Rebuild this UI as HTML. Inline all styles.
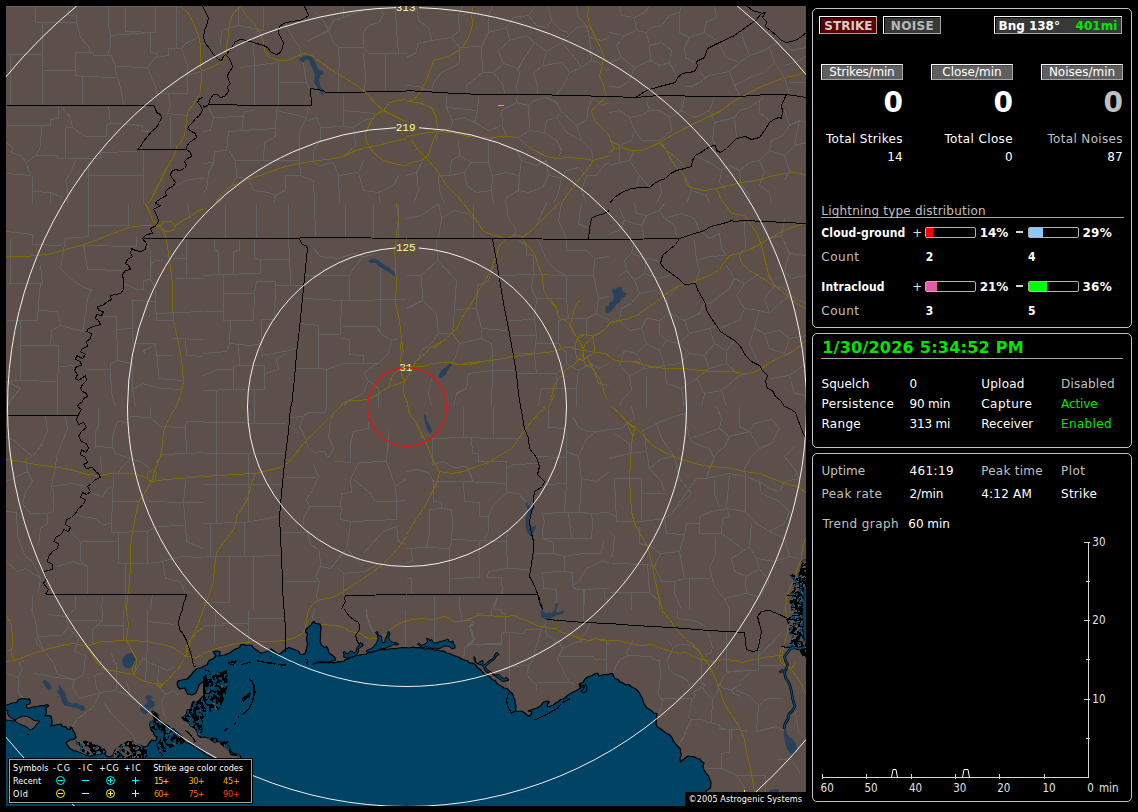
<!DOCTYPE html>
<html lang="en">
<head>
<meta charset="utf-8">
<title>Lightning Detector</title>
<style>
html,body{margin:0;padding:0;background:#000;}
body{position:relative;width:1138px;height:812px;overflow:hidden;font-family:"DejaVu Sans","Liberation Sans",sans-serif;}
#map{position:absolute;left:6px;top:6px;width:800px;height:800px;background:#5d504b;overflow:hidden;}
#map svg{position:absolute;left:0;top:0;display:block;}
.t{position:absolute;white-space:nowrap;display:block;}
.pn{position:absolute;box-sizing:border-box;border:1px solid #c4c4c4;border-radius:5px;background:#000;}
.bx{position:absolute;box-sizing:border-box;border:1px solid;border-color:#fff #a6a6a6 #a6a6a6 #fff;box-shadow:inset 1px 1px 0 #000;}
.bx.g{box-shadow:inset 1px 1px 0 #484848;}
.bar{position:absolute;box-sizing:border-box;border:1px solid #b4b4b4;border-radius:2px;width:51px;height:11px;background:#000;}
.bar i{position:absolute;left:0;top:0;height:9px;display:block;}
.hl{position:absolute;height:1px;background:#a8a8a8;}
#cpbox{position:absolute;left:685px;top:792px;width:121px;height:14px;background:#000;}
</style>
</head>
<body>

<div id="map">
<svg width="800" height="800" viewBox="6 6 800 800">
<defs><pattern id="mr" width="40" height="40" patternUnits="userSpaceOnUse"><rect width="40" height="40" fill="#004365"/><path d="M1 0h7v1h-7zM9 0h3v1h-3zM17 0h5v1h-5zM23 0h6v1h-6zM34 0h4v1h-4zM2 1h11v1h-11zM17 1h5v1h-5zM24 1h6v1h-6zM33 1h3v1h-3zM2 2h11v1h-11zM16 2h4v1h-4zM24 2h4v1h-4zM33 2h3v1h-3zM2 3h7v1h-7zM11 3h2v1h-2zM15 3h2v1h-2zM19 3h1v1h-1zM35 3h4v1h-4zM1 4h8v1h-8zM11 4h2v1h-2zM16 4h1v1h-1zM28 4h2v1h-2zM35 4h4v1h-4zM0 5h9v1h-9zM10 5h3v1h-3zM15 5h4v1h-4zM28 5h2v1h-2zM34 5h1v1h-1zM37 5h3v1h-3zM0 6h8v1h-8zM10 6h1v1h-1zM15 6h6v1h-6zM26 6h4v1h-4zM32 6h3v1h-3zM37 6h3v1h-3zM0 7h5v1h-5zM19 7h2v1h-2zM23 7h1v1h-1zM25 7h10v1h-10zM38 7h2v1h-2zM1 8h4v1h-4zM19 8h16v1h-16zM38 8h2v1h-2zM0 9h5v1h-5zM17 9h1v1h-1zM20 9h17v1h-17zM39 9h1v1h-1zM1 10h5v1h-5zM10 10h4v1h-4zM17 10h2v1h-2zM20 10h8v1h-8zM31 10h6v1h-6zM1 11h1v1h-1zM3 11h3v1h-3zM10 11h16v1h-16zM32 11h4v1h-4zM0 12h2v1h-2zM3 12h3v1h-3zM9 12h2v1h-2zM14 12h2v1h-2zM17 12h9v1h-9zM33 12h3v1h-3zM3 13h7v1h-7zM17 13h6v1h-6zM25 13h2v1h-2zM33 13h3v1h-3zM4 14h1v1h-1zM13 14h2v1h-2zM17 14h6v1h-6zM25 14h5v1h-5zM33 14h3v1h-3zM3 15h2v1h-2zM13 15h3v1h-3zM19 15h4v1h-4zM29 15h2v1h-2zM33 15h3v1h-3zM3 16h2v1h-2zM8 16h1v1h-1zM11 16h1v1h-1zM13 16h4v1h-4zM20 16h3v1h-3zM29 16h2v1h-2zM33 16h2v1h-2zM3 17h3v1h-3zM8 17h1v1h-1zM11 17h8v1h-8zM20 17h3v1h-3zM33 17h2v1h-2zM39 17h1v1h-1zM0 18h1v1h-1zM3 18h3v1h-3zM11 18h15v1h-15zM34 18h3v1h-3zM38 18h2v1h-2zM0 19h1v1h-1zM3 19h5v1h-5zM10 19h4v1h-4zM16 19h13v1h-13zM34 19h6v1h-6zM0 20h1v1h-1zM3 20h4v1h-4zM11 20h2v1h-2zM16 20h13v1h-13zM34 20h6v1h-6zM0 21h1v1h-1zM4 21h2v1h-2zM12 21h1v1h-1zM16 21h9v1h-9zM26 21h3v1h-3zM32 21h2v1h-2zM36 21h4v1h-4zM0 22h3v1h-3zM5 22h1v1h-1zM16 22h2v1h-2zM20 22h8v1h-8zM31 22h3v1h-3zM36 22h4v1h-4zM0 23h3v1h-3zM5 23h2v1h-2zM16 23h2v1h-2zM20 23h7v1h-7zM31 23h3v1h-3zM37 23h3v1h-3zM0 24h3v1h-3zM6 24h7v1h-7zM20 24h4v1h-4zM25 24h1v1h-1zM31 24h2v1h-2zM36 24h2v1h-2zM1 25h3v1h-3zM7 25h7v1h-7zM21 25h3v1h-3zM28 25h2v1h-2zM31 25h2v1h-2zM36 25h1v1h-1zM0 26h4v1h-4zM9 26h5v1h-5zM16 26h1v1h-1zM23 26h1v1h-1zM31 26h2v1h-2zM36 26h2v1h-2zM1 27h4v1h-4zM9 27h5v1h-5zM16 27h2v1h-2zM19 27h2v1h-2zM23 27h1v1h-1zM34 27h5v1h-5zM2 28h4v1h-4zM9 28h2v1h-2zM17 28h7v1h-7zM31 28h1v1h-1zM34 28h6v1h-6zM3 29h1v1h-1zM9 29h2v1h-2zM17 29h8v1h-8zM29 29h3v1h-3zM33 29h6v1h-6zM2 30h4v1h-4zM9 30h2v1h-2zM17 30h10v1h-10zM29 30h3v1h-3zM33 30h3v1h-3zM3 31h3v1h-3zM10 31h3v1h-3zM18 31h3v1h-3zM22 31h5v1h-5zM29 31h2v1h-2zM33 31h3v1h-3zM0 32h1v1h-1zM11 32h1v1h-1zM19 32h8v1h-8zM29 32h3v1h-3zM34 32h2v1h-2zM39 32h1v1h-1zM1 33h1v1h-1zM10 33h1v1h-1zM20 33h7v1h-7zM30 33h1v1h-1zM33 33h3v1h-3zM2 34h1v1h-1zM5 34h1v1h-1zM9 34h2v1h-2zM15 34h1v1h-1zM20 34h4v1h-4zM30 34h7v1h-7zM2 35h1v1h-1zM5 35h2v1h-2zM13 35h11v1h-11zM26 35h3v1h-3zM31 35h6v1h-6zM0 36h6v1h-6zM12 36h12v1h-12zM25 36h5v1h-5zM31 36h8v1h-8zM0 37h7v1h-7zM12 37h3v1h-3zM16 37h3v1h-3zM22 37h2v1h-2zM25 37h1v1h-1zM32 37h7v1h-7zM0 38h7v1h-7zM13 38h1v1h-1zM16 38h2v1h-2zM22 38h5v1h-5zM33 38h6v1h-6zM1 39h1v1h-1zM3 39h9v1h-9zM13 39h2v1h-2zM17 39h2v1h-2zM22 39h6v1h-6zM34 39h5v1h-5z" fill="#000"/><path d="M12 0h1v1h-1zM29 0h1v1h-1zM38 0h1v1h-1zM36 1h1v1h-1zM25 4h1v1h-1zM21 5h2v1h-2zM31 5h2v1h-2zM21 6h2v1h-2zM35 6h1v1h-1zM11 7h1v1h-1zM22 7h1v1h-1zM9 10h1v1h-1zM6 11h1v1h-1zM8 11h1v1h-1zM7 12h2v1h-2zM39 12h1v1h-1zM10 13h1v1h-1zM38 14h2v1h-2zM6 15h1v1h-1zM33 18h1v1h-1zM33 19h1v1h-1zM7 20h1v1h-1zM13 23h2v1h-2zM14 24h1v1h-1zM30 24h1v1h-1zM24 25h1v1h-1zM15 26h1v1h-1zM15 27h1v1h-1zM15 28h2v1h-2zM15 29h2v1h-2zM0 30h1v1h-1zM13 30h4v1h-4zM14 31h2v1h-2zM21 31h1v1h-1zM28 31h1v1h-1zM15 32h1v1h-1zM30 38h1v1h-1z" fill="#5d504b"/></pattern><pattern id="mr2" width="40" height="40" patternUnits="userSpaceOnUse"><rect width="40" height="40" fill="#5d504b"/><path d="M7 0h4v1h-4zM12 0h3v1h-3zM20 0h2v1h-2zM30 0h7v1h-7zM6 1h5v1h-5zM19 1h3v1h-3zM28 1h9v1h-9zM1 2h2v1h-2zM6 2h5v1h-5zM18 2h5v1h-5zM29 2h4v1h-4zM34 2h3v1h-3zM1 3h2v1h-2zM5 3h6v1h-6zM14 3h2v1h-2zM19 3h5v1h-5zM29 3h3v1h-3zM34 3h3v1h-3zM1 4h2v1h-2zM5 4h5v1h-5zM14 4h3v1h-3zM19 4h6v1h-6zM34 4h3v1h-3zM1 5h3v1h-3zM5 5h4v1h-4zM14 5h3v1h-3zM20 5h1v1h-1zM23 5h1v1h-1zM35 5h3v1h-3zM0 6h3v1h-3zM6 6h2v1h-2zM15 6h1v1h-1zM24 6h1v1h-1zM31 6h1v1h-1zM35 6h3v1h-3zM39 6h1v1h-1zM0 7h2v1h-2zM6 7h2v1h-2zM23 7h2v1h-2zM30 7h2v1h-2zM35 7h3v1h-3zM39 7h1v1h-1zM0 8h8v1h-8zM10 8h2v1h-2zM18 8h1v1h-1zM20 8h1v1h-1zM23 8h5v1h-5zM31 8h1v1h-1zM35 8h4v1h-4zM0 9h7v1h-7zM10 9h1v1h-1zM23 9h2v1h-2zM27 9h2v1h-2zM30 9h3v1h-3zM35 9h4v1h-4zM0 10h4v1h-4zM18 10h1v1h-1zM23 10h2v1h-2zM28 10h1v1h-1zM30 10h2v1h-2zM37 10h2v1h-2zM0 11h5v1h-5zM13 11h1v1h-1zM18 11h1v1h-1zM22 11h5v1h-5zM37 11h1v1h-1zM0 12h6v1h-6zM24 12h3v1h-3zM37 12h1v1h-1zM39 12h1v1h-1zM0 13h7v1h-7zM25 13h2v1h-2zM38 13h2v1h-2zM0 14h7v1h-7zM11 14h2v1h-2zM14 14h8v1h-8zM26 14h2v1h-2zM39 14h1v1h-1zM2 15h6v1h-6zM11 15h11v1h-11zM34 15h1v1h-1zM39 15h1v1h-1zM5 16h2v1h-2zM12 16h5v1h-5zM23 16h2v1h-2zM0 17h1v1h-1zM6 17h1v1h-1zM11 17h6v1h-6zM19 17h6v1h-6zM26 17h1v1h-1zM29 17h2v1h-2zM39 17h1v1h-1zM0 18h1v1h-1zM2 18h1v1h-1zM5 18h3v1h-3zM10 18h17v1h-17zM29 18h1v1h-1zM36 18h4v1h-4zM0 19h1v1h-1zM2 19h2v1h-2zM6 19h6v1h-6zM15 19h1v1h-1zM18 19h10v1h-10zM33 19h1v1h-1zM36 19h1v1h-1zM39 19h1v1h-1zM0 20h1v1h-1zM5 20h6v1h-6zM18 20h10v1h-10zM39 20h1v1h-1zM3 21h8v1h-8zM18 21h10v1h-10zM3 22h5v1h-5zM9 22h3v1h-3zM18 22h4v1h-4zM24 22h5v1h-5zM38 22h2v1h-2zM4 23h3v1h-3zM9 23h3v1h-3zM19 23h4v1h-4zM25 23h4v1h-4zM33 23h3v1h-3zM39 23h1v1h-1zM5 24h2v1h-2zM9 24h4v1h-4zM14 24h1v1h-1zM22 24h1v1h-1zM26 24h2v1h-2zM33 24h1v1h-1zM39 24h1v1h-1zM5 25h13v1h-13zM39 25h1v1h-1zM2 26h1v1h-1zM8 26h8v1h-8zM18 26h2v1h-2zM33 26h1v1h-1zM2 27h1v1h-1zM9 27h4v1h-4zM19 27h2v1h-2zM24 27h1v1h-1zM33 27h3v1h-3zM10 28h3v1h-3zM19 28h2v1h-2zM24 28h1v1h-1zM29 28h1v1h-1zM33 28h3v1h-3zM2 29h2v1h-2zM10 29h5v1h-5zM18 29h7v1h-7zM29 29h1v1h-1zM32 29h4v1h-4zM2 30h3v1h-3zM10 30h13v1h-13zM24 30h2v1h-2zM32 30h3v1h-3zM2 31h2v1h-2zM7 31h1v1h-1zM11 31h5v1h-5zM20 31h3v1h-3zM31 31h4v1h-4zM37 31h2v1h-2zM7 32h2v1h-2zM12 32h1v1h-1zM15 32h1v1h-1zM21 32h2v1h-2zM30 32h4v1h-4zM37 32h3v1h-3zM0 33h1v1h-1zM6 33h4v1h-4zM13 33h3v1h-3zM21 33h1v1h-1zM26 33h4v1h-4zM34 33h2v1h-2zM39 33h1v1h-1zM0 34h2v1h-2zM7 34h2v1h-2zM13 34h3v1h-3zM17 34h5v1h-5zM25 34h1v1h-1zM28 34h1v1h-1zM35 34h1v1h-1zM39 34h1v1h-1zM0 35h3v1h-3zM10 35h6v1h-6zM17 35h4v1h-4zM25 35h1v1h-1zM38 35h2v1h-2zM2 36h3v1h-3zM8 36h4v1h-4zM16 36h1v1h-1zM19 36h2v1h-2zM37 36h3v1h-3zM2 37h2v1h-2zM6 37h4v1h-4zM11 37h1v1h-1zM15 37h2v1h-2zM19 37h2v1h-2zM36 37h3v1h-3zM3 38h5v1h-5zM14 38h7v1h-7zM36 38h2v1h-2zM4 39h2v1h-2zM8 39h1v1h-1zM12 39h5v1h-5zM19 39h2v1h-2zM33 39h4v1h-4z" fill="#000"/><path d="M3 0h4v1h-4zM11 0h1v1h-1zM17 0h2v1h-2zM28 0h2v1h-2zM38 0h2v1h-2zM0 1h2v1h-2zM3 1h1v1h-1zM11 1h1v1h-1zM18 1h1v1h-1zM24 1h1v1h-1zM39 1h1v1h-1zM0 2h1v1h-1zM16 2h1v1h-1zM24 2h4v1h-4zM33 2h1v1h-1zM37 2h3v1h-3zM0 3h1v1h-1zM12 3h1v1h-1zM16 3h1v1h-1zM24 3h4v1h-4zM32 3h2v1h-2zM37 3h3v1h-3zM10 4h3v1h-3zM25 4h3v1h-3zM32 4h1v1h-1zM37 4h3v1h-3zM4 5h1v1h-1zM9 5h3v1h-3zM24 5h1v1h-1zM30 5h4v1h-4zM5 6h1v1h-1zM8 6h2v1h-2zM23 6h1v1h-1zM27 6h4v1h-4zM32 6h2v1h-2zM8 7h1v1h-1zM18 7h1v1h-1zM26 7h4v1h-4zM32 7h1v1h-1zM38 7h1v1h-1zM8 8h1v1h-1zM13 8h3v1h-3zM19 8h1v1h-1zM21 8h2v1h-2zM28 8h1v1h-1zM30 8h1v1h-1zM39 8h1v1h-1zM13 9h3v1h-3zM19 9h1v1h-1zM22 9h1v1h-1zM26 9h1v1h-1zM29 9h1v1h-1zM33 9h1v1h-1zM39 9h1v1h-1zM8 10h1v1h-1zM12 10h4v1h-4zM19 10h1v1h-1zM22 10h1v1h-1zM33 10h2v1h-2zM39 10h1v1h-1zM6 11h3v1h-3zM12 11h1v1h-1zM15 11h1v1h-1zM21 11h1v1h-1zM27 11h2v1h-2zM39 11h1v1h-1zM7 12h2v1h-2zM12 12h1v1h-1zM15 12h1v1h-1zM20 12h3v1h-3zM27 12h3v1h-3zM34 12h2v1h-2zM7 13h3v1h-3zM20 13h5v1h-5zM28 13h3v1h-3zM33 13h5v1h-5zM23 14h1v1h-1zM28 14h4v1h-4zM34 14h1v1h-1zM38 14h1v1h-1zM27 15h4v1h-4zM38 15h1v1h-1zM1 16h2v1h-2zM11 16h1v1h-1zM21 16h1v1h-1zM25 16h1v1h-1zM27 16h1v1h-1zM30 16h5v1h-5zM38 16h2v1h-2zM7 17h1v1h-1zM31 17h4v1h-4zM38 17h1v1h-1zM1 18h1v1h-1zM30 18h1v1h-1zM32 18h3v1h-3zM1 19h1v1h-1zM12 19h3v1h-3zM28 19h2v1h-2zM34 19h2v1h-2zM1 20h4v1h-4zM12 20h1v1h-1zM14 20h2v1h-2zM28 20h1v1h-1zM34 20h2v1h-2zM11 21h3v1h-3zM28 21h2v1h-2zM35 21h2v1h-2zM13 22h1v1h-1zM22 22h2v1h-2zM29 22h1v1h-1zM35 22h3v1h-3zM29 23h1v1h-1zM36 23h3v1h-3zM0 24h2v1h-2zM13 24h1v1h-1zM17 24h1v1h-1zM35 24h4v1h-4zM0 25h2v1h-2zM18 25h1v1h-1zM20 25h2v1h-2zM34 25h2v1h-2zM0 26h2v1h-2zM4 26h4v1h-4zM16 26h2v1h-2zM20 26h2v1h-2zM34 26h1v1h-1zM0 27h1v1h-1zM15 27h3v1h-3zM21 27h1v1h-1zM30 27h2v1h-2zM37 27h1v1h-1zM0 28h1v1h-1zM3 28h1v1h-1zM14 28h2v1h-2zM22 28h2v1h-2zM30 28h2v1h-2zM0 29h2v1h-2zM4 29h1v1h-1zM9 29h1v1h-1zM30 29h2v1h-2zM39 29h1v1h-1zM0 30h2v1h-2zM23 30h1v1h-1zM26 30h2v1h-2zM29 30h2v1h-2zM35 30h1v1h-1zM39 30h1v1h-1zM0 31h1v1h-1zM4 31h1v1h-1zM16 31h2v1h-2zM25 31h2v1h-2zM0 32h1v1h-1zM3 32h2v1h-2zM11 32h1v1h-1zM13 32h2v1h-2zM16 32h1v1h-1zM24 32h4v1h-4zM29 32h1v1h-1zM1 33h1v1h-1zM11 33h2v1h-2zM30 33h3v1h-3zM36 33h3v1h-3zM22 34h1v1h-1zM26 34h1v1h-1zM30 34h1v1h-1zM33 34h1v1h-1zM36 34h3v1h-3zM3 35h1v1h-1zM21 35h1v1h-1zM32 35h2v1h-2zM37 35h1v1h-1zM0 36h2v1h-2zM12 36h2v1h-2zM21 36h1v1h-1zM32 36h2v1h-2zM0 37h1v1h-1zM13 37h1v1h-1zM21 37h1v1h-1zM32 37h2v1h-2zM2 38h1v1h-1zM9 38h2v1h-2zM31 38h1v1h-1zM38 38h2v1h-2zM3 39h1v1h-1zM6 39h2v1h-2zM9 39h2v1h-2zM18 39h1v1h-1zM25 39h1v1h-1zM28 39h1v1h-1zM38 39h2v1h-2z" fill="#004365"/></pattern></defs>
<path fill="none" stroke="#626464" stroke-width="1" shape-rendering="crispEdges" d="M501.5,590.5 501.5,593.5M499.5,594.5 496.5,599.5 493.5,604.5 491.5,609.5 491.5,614.5M493.5,609.5 501.5,609.5 501.5,613.5 505.5,613.5 505.5,632.5 501.5,633.5 501.5,643.5 467.5,644.5M509.5,633.5 509.5,690.5M505.5,632.5 524.5,633.5 525.5,629.5 541.5,629.5 546.5,621.5M541.5,629.5 538.5,639.5 535.5,648.5 533.5,657.5 528.5,666.5 526.5,674.5 533.5,682.5 536.5,684.5 536.5,690.5M545.5,627.5 546.5,635.5 554.5,638.5 554.5,642.5M559.5,642.5 562.5,648.5 558.5,656.5 557.5,659.5 561.5,666.5 565.5,676.5 570.5,682.5 574.5,684.5M562.5,648.5 575.5,642.5 581.5,641.5 582.5,636.5 588.5,628.5 589.5,623.5M559.5,656.5 593.5,656.5 594.5,659.5 606.5,659.5 606.5,643.5 609.5,643.5M556.5,590.5 556.5,602.5M584.5,590.5 583.5,621.5M604.5,590.5 604.5,597.5 609.5,601.5M536.5,682.5 570.5,682.5M509.5,666.5 528.5,665.5M472.5,622.5 469.5,626.5 471.5,633.5 474.5,639.5 469.5,643.5 467.5,644.5M476.5,613.5 481.5,613.5 483.5,614.5M35.5,6.5 35.5,22.5 76.5,22.5M68.5,6.5 68.5,15.5 76.5,15.5 76.5,22.5 80.5,37.5 88.5,46.5 90.5,52.5M42.5,22.5 42.5,105.5M6.5,54.5 42.5,54.5M10.5,54.5 10.5,105.5M42.5,70.5 75.5,70.5 75.5,52.5 93.5,52.5 93.5,55.5 111.5,55.5M75.5,70.5 75.5,75.5 82.5,76.5 117.5,77.5 120.5,87.5 122.5,97.5 123.5,105.5M82.5,76.5 82.5,105.5M111.5,55.5 115.5,66.5 116.5,76.5M115.5,66.5 147.5,67.5 155.5,57.5 168.5,55.5 168.5,48.5 181.5,48.5 185.5,43.5 191.5,40.5 198.5,37.5M147.5,67.5 151.5,77.5 155.5,86.5 156.5,93.5 187.5,93.5 187.5,75.5 200.5,71.5M181.5,48.5 187.5,65.5 187.5,75.5M108.5,6.5 108.5,25.5 110.5,35.5 150.5,32.5 150.5,52.5 157.5,53.5 157.5,57.5M125.5,6.5 125.5,31.5 155.5,32.5M155.5,6.5 155.5,32.5M176.5,6.5 176.5,48.5M110.5,35.5 110.5,45.5 107.5,55.5M168.5,93.5 170.5,105.5 167.5,113.5 188.5,115.5M58.5,105.5 58.5,118.5 50.5,119.5 50.5,125.5 6.5,125.5M61.5,106.5 70.5,117.5 72.5,127.5 85.5,136.5 106.5,136.5 106.5,125.5 110.5,123.5 108.5,105.5M110.5,123.5 142.5,125.5 142.5,131.5 150.5,131.5M41.5,125.5 40.5,147.5 35.5,155.5 26.5,162.5 30.5,175.5 6.5,173.5M35.5,155.5 57.5,155.5 57.5,158.5 100.5,158.5 100.5,152.5 137.5,151.5M65.5,158.5 65.5,127.5 72.5,127.5M75.5,160.5 70.5,172.5 65.5,180.5 67.5,190.5 67.5,203.5M32.5,175.5 32.5,191.5 50.5,192.5 62.5,197.5M88.5,175.5 143.5,175.5M88.5,160.5 88.5,203.5M143.5,150.5 143.5,203.5M6.5,142.5 12.5,147.5 11.5,152.5 20.5,155.5 26.5,162.5M170.5,115.5 170.5,149.5M175.5,186.5 185.5,180.5 197.5,178.5 203.5,178.5M32.5,191.5 32.5,203.5M50.5,192.5 50.5,203.5M6.5,6.5 181.5,6.5M238.5,6.5 238.5,25.5 221.5,30.5 220.5,45.5M263.5,6.5 263.5,30.5 256.5,31.5M238.5,25.5 263.5,30.5M253.5,43.5 254.5,65.5 254.5,105.5M240.5,67.5 254.5,65.5 278.5,62.5 278.5,105.5M278.5,82.5 306.5,82.5 309.5,88.5M299.5,47.5 303.5,65.5 306.5,82.5M285.5,22.5 289.5,32.5 299.5,47.5M308.5,40.5 318.5,35.5 328.5,30.5 333.5,20.5 343.5,17.5 353.5,13.5 363.5,10.5M328.5,30.5 333.5,42.5 338.5,47.5 363.5,47.5 363.5,32.5 368.5,25.5 378.5,22.5 383.5,15.5 380.5,6.5M338.5,47.5 339.5,62.5 338.5,75.5 338.5,91.5M363.5,47.5 368.5,53.5 385.5,53.5 385.5,91.5M363.5,53.5 365.5,75.5 364.5,91.5M385.5,53.5 406.5,53.5M395.5,6.5 396.5,30.5 398.5,53.5M343.5,6.5 343.5,17.5M315.5,12.5 323.5,20.5 328.5,30.5M208.5,107.5 213.5,117.5 210.5,130.5 203.5,131.5M213.5,117.5 243.5,116.5 244.5,111.5 254.5,110.5M243.5,116.5 241.5,130.5 228.5,131.5 226.5,150.5 214.5,151.5 213.5,162.5 203.5,163.5M241.5,130.5 275.5,128.5 276.5,110.5 278.5,105.5M275.5,128.5 275.5,136.5 264.5,142.5 263.5,160.5 235.5,160.5 228.5,150.5M276.5,110.5 306.5,117.5 308.5,105.5M306.5,117.5 299.5,132.5 299.5,160.5 263.5,160.5M316.5,117.5 320.5,127.5 343.5,126.5 343.5,95.5M308.5,120.5 316.5,117.5M320.5,127.5 320.5,140.5 313.5,150.5 313.5,162.5M343.5,126.5 353.5,127.5 363.5,120.5 375.5,117.5M343.5,110.5 375.5,113.5M353.5,127.5 355.5,145.5 343.5,156.5M299.5,160.5 300.5,175.5 285.5,175.5 285.5,190.5 275.5,195.5 273.5,203.5M235.5,160.5 236.5,177.5 248.5,178.5 253.5,190.5 268.5,192.5 275.5,195.5M213.5,162.5 208.5,172.5 206.5,190.5 203.5,192.5M236.5,177.5 228.5,190.5 218.5,203.5M313.5,162.5 320.5,165.5 333.5,162.5 338.5,175.5 339.5,203.5M300.5,175.5 313.5,180.5 314.5,203.5M338.5,175.5 358.5,172.5 363.5,160.5M358.5,172.5 363.5,190.5 378.5,192.5 380.5,203.5M378.5,192.5 393.5,185.5 398.5,175.5M416.5,6.5 418.5,20.5 428.5,27.5 431.5,40.5 417.5,43.5 416.5,52.5 406.5,57.5M431.5,40.5 451.5,37.5 459.5,30.5 458.5,15.5 462.5,6.5M451.5,37.5 459.5,47.5 459.5,62.5 452.5,67.5 441.5,72.5 433.5,82.5 431.5,91.5M459.5,47.5 481.5,46.5 488.5,32.5 488.5,15.5 492.5,6.5M481.5,46.5 482.5,72.5 466.5,85.5 467.5,92.5M482.5,72.5 493.5,72.5 503.5,85.5 504.5,93.5M488.5,32.5 506.5,27.5 509.5,40.5 498.5,50.5 503.5,63.5 493.5,72.5M503.5,63.5 518.5,68.5 519.5,75.5 516.5,85.5 517.5,93.5M509.5,40.5 526.5,35.5 534.5,42.5 521.5,62.5 518.5,68.5M506.5,27.5 513.5,17.5 528.5,15.5 534.5,6.5M534.5,42.5 546.5,51.5 561.5,42.5 576.5,27.5 586.5,25.5M546.5,51.5 542.5,65.5 533.5,73.5 537.5,85.5 537.5,93.5M542.5,65.5 562.5,62.5 569.5,72.5 563.5,85.5 556.5,94.5M569.5,72.5 581.5,67.5 591.5,60.5 598.5,62.5M561.5,42.5 571.5,53.5 581.5,67.5M548.5,6.5 551.5,20.5 561.5,30.5 568.5,32.5M528.5,15.5 536.5,25.5 546.5,27.5 551.5,20.5M576.5,6.5 578.5,17.5 586.5,25.5 589.5,37.5 591.5,60.5M406.5,85.5 418.5,86.5 431.5,91.5M446.5,95.5 446.5,107.5 452.5,120.5 451.5,127.5M446.5,107.5 477.5,110.5 478.5,97.5M477.5,110.5 474.5,122.5 488.5,130.5 502.5,125.5 501.5,110.5 516.5,102.5 517.5,94.5M502.5,125.5 506.5,136.5M516.5,102.5 528.5,105.5 529.5,130.5 518.5,137.5M528.5,105.5 533.5,100.5 546.5,97.5 556.5,102.5 561.5,111.5 556.5,117.5 546.5,120.5 544.5,132.5 529.5,130.5M561.5,111.5 576.5,125.5 586.5,120.5 588.5,105.5 593.5,97.5M576.5,125.5 581.5,140.5 591.5,150.5 593.5,160.5M544.5,132.5 556.5,140.5 561.5,150.5 558.5,157.5M556.5,117.5 566.5,132.5 581.5,140.5M452.5,120.5 463.5,117.5 474.5,122.5M451.5,127.5 438.5,131.5 436.5,140.5M458.5,140.5 459.5,155.5 451.5,160.5 449.5,175.5 438.5,175.5M459.5,155.5 471.5,162.5 488.5,162.5 488.5,142.5 492.5,137.5M488.5,162.5 492.5,175.5 491.5,190.5 476.5,192.5 466.5,185.5 464.5,172.5 471.5,162.5M492.5,175.5 506.5,172.5 519.5,175.5 521.5,160.5 516.5,150.5M519.5,175.5 518.5,190.5 506.5,197.5 504.5,203.5M491.5,190.5 493.5,203.5M521.5,160.5 536.5,165.5 546.5,160.5 548.5,175.5 542.5,187.5 528.5,192.5 518.5,190.5M548.5,175.5 561.5,177.5 566.5,170.5 578.5,167.5M561.5,177.5 558.5,192.5 553.5,203.5M578.5,167.5 586.5,175.5 596.5,175.5 603.5,165.5 609.5,162.5M586.5,175.5 581.5,190.5 586.5,203.5M406.5,175.5 416.5,172.5 421.5,162.5M416.5,172.5 418.5,190.5 413.5,203.5M438.5,175.5 439.5,190.5 444.5,203.5M449.5,175.5 464.5,172.5M593.5,97.5 601.5,105.5 609.5,102.5M598.5,62.5 606.5,70.5 609.5,68.5M589.5,37.5 601.5,40.5 609.5,37.5M619.5,6.5 621.5,15.5 634.5,17.5 644.5,12.5 649.5,6.5M634.5,17.5 636.5,30.5 646.5,32.5 651.5,27.5 661.5,25.5 669.5,15.5 679.5,12.5 681.5,6.5M646.5,32.5 649.5,45.5 661.5,42.5 671.5,50.5 669.5,62.5 659.5,65.5 650.5,60.5 649.5,45.5M679.5,12.5 679.5,32.5 689.5,37.5 704.5,32.5 705.5,22.5 716.5,17.5 714.5,6.5M689.5,37.5 684.5,47.5 685.5,57.5 694.5,62.5M609.5,32.5 624.5,35.5 636.5,30.5M624.5,35.5 616.5,45.5 621.5,57.5 609.5,62.5M621.5,57.5 634.5,67.5 650.5,60.5M634.5,67.5 629.5,80.5 619.5,87.5 609.5,86.5M669.5,62.5 674.5,72.5 677.5,77.5M704.5,32.5 719.5,42.5M719.5,45.5 726.5,57.5 739.5,62.5 749.5,55.5 759.5,52.5 769.5,47.5 781.5,40.5M739.5,62.5 729.5,71.5 734.5,85.5 739.5,95.5M729.5,71.5 709.5,75.5 699.5,82.5 691.5,86.5 684.5,86.5M699.5,71.5 704.5,77.5 709.5,75.5M749.5,55.5 744.5,42.5 741.5,32.5M769.5,47.5 774.5,62.5 784.5,77.5 789.5,94.5M774.5,62.5 764.5,72.5 749.5,77.5 734.5,85.5M784.5,65.5 799.5,60.5 806.5,55.5M789.5,82.5 806.5,82.5M609.5,112.5 619.5,110.5 629.5,117.5 641.5,115.5 649.5,110.5 646.5,100.5 649.5,97.5M629.5,117.5 634.5,130.5 631.5,140.5 619.5,145.5M649.5,110.5 659.5,110.5 669.5,117.5 681.5,110.5 684.5,97.5M669.5,117.5 671.5,130.5 659.5,140.5M681.5,110.5 694.5,117.5 709.5,110.5 714.5,97.5M709.5,110.5 714.5,122.5 712.5,140.5 716.5,145.5M714.5,122.5 734.5,117.5 739.5,110.5 749.5,107.5 759.5,100.5 764.5,96.5M734.5,117.5 736.5,136.5M759.5,100.5 759.5,112.5 769.5,120.5M634.5,130.5 641.5,140.5 659.5,140.5 666.5,150.5M619.5,162.5 629.5,160.5 639.5,175.5 636.5,186.5M629.5,160.5 634.5,150.5M666.5,150.5 679.5,160.5 684.5,167.5M694.5,155.5 709.5,162.5 721.5,170.5 729.5,165.5 739.5,170.5 749.5,162.5 759.5,160.5 769.5,150.5 771.5,140.5 781.5,136.5 789.5,125.5 784.5,110.5M721.5,170.5 719.5,182.5 726.5,190.5M739.5,170.5 741.5,185.5 749.5,195.5 749.5,203.5M759.5,160.5 764.5,172.5 759.5,185.5 769.5,192.5 771.5,203.5M769.5,150.5 784.5,155.5 794.5,145.5 806.5,142.5M784.5,155.5 789.5,170.5 784.5,180.5M659.5,180.5 661.5,192.5 656.5,203.5M684.5,175.5 691.5,190.5 686.5,203.5M691.5,190.5 706.5,195.5 709.5,203.5M609.5,140.5 619.5,145.5 619.5,162.5 609.5,165.5M639.5,175.5 649.5,187.5M789.5,125.5 799.5,120.5 806.5,122.5M794.5,145.5 799.5,120.5M781.5,40.5 791.5,50.5 806.5,47.5M88.5,203.5 88.5,236.5 65.5,238.5 63.5,250.5M88.5,225.5 128.5,225.5 128.5,203.5M6.5,231.5 32.5,234.5 32.5,244.5 63.5,245.5M10.5,238.5 10.5,283.5M83.5,245.5 136.5,246.5 136.5,235.5M83.5,245.5 85.5,256.5 87.5,269.5 123.5,270.5M63.5,250.5 60.5,268.5 70.5,278.5 85.5,288.5 91.5,289.5 87.5,298.5M40.5,265.5 42.5,283.5 6.5,283.5M40.5,283.5 38.5,303.5 37.5,320.5 6.5,320.5M38.5,310.5 57.5,311.5 60.5,325.5 51.5,330.5 50.5,345.5 20.5,345.5M60.5,325.5 82.5,331.5 86.5,308.5 87.5,298.5M20.5,320.5 20.5,380.5 6.5,381.5M20.5,380.5 57.5,381.5 58.5,366.5 75.5,365.5M58.5,345.5 58.5,366.5M50.5,345.5 58.5,345.5M116.5,316.5 117.5,360.5 110.5,363.5 110.5,369.5 85.5,369.5M102.5,316.5 116.5,316.5M117.5,329.5 132.5,328.5 132.5,300.5 155.5,301.5 155.5,288.5M123.5,283.5 136.5,289.5 143.5,289.5 143.5,280.5 150.5,279.5M150.5,265.5 150.5,279.5 155.5,288.5M150.5,265.5 155.5,259.5 162.5,261.5M143.5,239.5 150.5,250.5 150.5,265.5M155.5,313.5 203.5,311.5M155.5,301.5 156.5,320.5 172.5,320.5M155.5,343.5 156.5,355.5 172.5,355.5M132.5,328.5 132.5,343.5 155.5,343.5 152.5,346.5 143.5,350.5 145.5,354.5M172.5,338.5 203.5,339.5M157.5,355.5 158.5,378.5 182.5,380.5M117.5,360.5 132.5,363.5 132.5,389.5 142.5,383.5 160.5,388.5 182.5,389.5M110.5,369.5 111.5,393.5 115.5,406.5M132.5,389.5 135.5,406.5M175.5,278.5 203.5,278.5M186.5,239.5 186.5,278.5M172.5,258.5 186.5,258.5M187.5,203.5 190.5,218.5M6.5,381.5 20.5,388.5 10.5,400.5 7.5,406.5M57.5,381.5 57.5,406.5M185.5,339.5 186.5,355.5 203.5,356.5M225.5,203.5 225.5,238.5M256.5,203.5 256.5,238.5M288.5,203.5 288.5,238.5M314.5,203.5 315.5,237.5M345.5,203.5 345.5,237.5M373.5,203.5 373.5,237.5M214.5,238.5 214.5,250.5 218.5,251.5 218.5,274.5 203.5,275.5M239.5,238.5 239.5,250.5 233.5,251.5 233.5,273.5M218.5,274.5 260.5,273.5 260.5,259.5 254.5,258.5 254.5,238.5M260.5,259.5 289.5,259.5 288.5,238.5M289.5,259.5 290.5,278.5 290.5,285.5 275.5,285.5 275.5,281.5 256.5,281.5 254.5,293.5M223.5,274.5 223.5,320.5 253.5,320.5 254.5,293.5 223.5,293.5M290.5,285.5 303.5,285.5M275.5,285.5 274.5,319.5 261.5,319.5 261.5,355.5 289.5,350.5 296.5,348.5M203.5,311.5 223.5,311.5M230.5,320.5 229.5,343.5 226.5,351.5 203.5,353.5M229.5,343.5 251.5,345.5 261.5,343.5M238.5,345.5 239.5,365.5 233.5,366.5 233.5,389.5 203.5,390.5M239.5,365.5 264.5,365.5 264.5,389.5 233.5,389.5M264.5,373.5 278.5,369.5 276.5,359.5 285.5,353.5M203.5,375.5 218.5,369.5 233.5,369.5M216.5,390.5 216.5,406.5M254.5,390.5 254.5,406.5M303.5,298.5 341.5,300.5 406.5,299.5M299.5,323.5 318.5,325.5 318.5,334.5 340.5,334.5 341.5,300.5M318.5,334.5 318.5,368.5 295.5,368.5M318.5,368.5 326.5,369.5 326.5,406.5M341.5,326.5 375.5,326.5 383.5,335.5 391.5,340.5 398.5,338.5M349.5,275.5 349.5,299.5M305.5,275.5 349.5,275.5 355.5,265.5 363.5,256.5 373.5,254.5M313.5,248.5 320.5,256.5 338.5,258.5 353.5,253.5 363.5,256.5M380.5,260.5 380.5,326.5M341.5,338.5 349.5,339.5 349.5,354.5 363.5,355.5 363.5,363.5 378.5,363.5 388.5,353.5 391.5,340.5M326.5,369.5 343.5,363.5 363.5,363.5M363.5,373.5 373.5,365.5 378.5,363.5M363.5,373.5 368.5,380.5 378.5,388.5 378.5,406.5M368.5,380.5 363.5,393.5 348.5,400.5 343.5,406.5M398.5,203.5 398.5,238.5M438.5,203.5 441.5,218.5 438.5,238.5M473.5,203.5 473.5,238.5M441.5,218.5 453.5,210.5 468.5,213.5 473.5,218.5M436.5,239.5 437.5,260.5 421.5,275.5 406.5,275.5M437.5,260.5 456.5,280.5 454.5,309.5 476.5,308.5 477.5,285.5 488.5,280.5 493.5,265.5M421.5,275.5 422.5,300.5 436.5,313.5 438.5,333.5 452.5,333.5 454.5,309.5M406.5,308.5 422.5,300.5M438.5,333.5 431.5,343.5 421.5,350.5 418.5,360.5M452.5,333.5 459.5,343.5 481.5,338.5 481.5,328.5 476.5,308.5M481.5,338.5 491.5,343.5 492.5,353.5 488.5,363.5M459.5,343.5 456.5,355.5 451.5,363.5M481.5,328.5 506.5,330.5M468.5,373.5 492.5,370.5 492.5,353.5M468.5,373.5 466.5,388.5 456.5,393.5 453.5,406.5M492.5,370.5 491.5,406.5M513.5,370.5 492.5,370.5M431.5,378.5 428.5,393.5 431.5,406.5M499.5,275.5 533.5,274.5 533.5,255.5 526.5,254.5 526.5,245.5 518.5,240.5M533.5,274.5 531.5,288.5 536.5,298.5 534.5,319.5 509.5,320.5M534.5,319.5 536.5,335.5 511.5,335.5M536.5,335.5 534.5,353.5 513.5,353.5M536.5,298.5 566.5,298.5 566.5,275.5 533.5,274.5M566.5,275.5 593.5,275.5 594.5,258.5 586.5,250.5 566.5,250.5 566.5,240.5M538.5,240.5 546.5,260.5 556.5,270.5 566.5,275.5M566.5,298.5 568.5,318.5 558.5,320.5 558.5,343.5 534.5,343.5M568.5,318.5 586.5,318.5 596.5,313.5 598.5,298.5 593.5,275.5M586.5,318.5 586.5,333.5 578.5,338.5M558.5,343.5 566.5,353.5 566.5,363.5 556.5,373.5 536.5,373.5 534.5,353.5M566.5,363.5 578.5,370.5 591.5,363.5 598.5,368.5 609.5,363.5M556.5,373.5 556.5,388.5 541.5,388.5 538.5,406.5M516.5,373.5 536.5,373.5M556.5,388.5 576.5,388.5 578.5,370.5M576.5,388.5 576.5,406.5M594.5,258.5 609.5,256.5M598.5,298.5 609.5,296.5M596.5,313.5 609.5,320.5M591.5,363.5 598.5,383.5 609.5,385.5M506.5,203.5 508.5,218.5 516.5,230.5 513.5,235.5M546.5,203.5 541.5,213.5 536.5,225.5 531.5,230.5M561.5,203.5 558.5,220.5 566.5,239.5M581.5,203.5 578.5,223.5 588.5,228.5M406.5,218.5 421.5,215.5 431.5,208.5 438.5,203.5M634.5,203.5 636.5,213.5 646.5,215.5 659.5,210.5 664.5,203.5M619.5,208.5 624.5,220.5 619.5,230.5 609.5,233.5M624.5,220.5 641.5,225.5 646.5,215.5M641.5,225.5 644.5,238.5M664.5,218.5 674.5,225.5 676.5,236.5M659.5,210.5 664.5,218.5 681.5,213.5 694.5,218.5 699.5,230.5M634.5,240.5 631.5,253.5 624.5,260.5 626.5,270.5 619.5,275.5M631.5,253.5 646.5,258.5 660.5,261.5M646.5,258.5 644.5,273.5 634.5,280.5 626.5,270.5M644.5,273.5 659.5,278.5 671.5,274.5M634.5,280.5 639.5,293.5 631.5,303.5 621.5,308.5 619.5,320.5 609.5,323.5M639.5,293.5 654.5,290.5 666.5,298.5 679.5,285.5M666.5,298.5 669.5,313.5 659.5,320.5 646.5,318.5 641.5,328.5 629.5,330.5 619.5,320.5M669.5,313.5 684.5,320.5 699.5,313.5 704.5,303.5M684.5,320.5 689.5,333.5 679.5,343.5 666.5,340.5 659.5,333.5 659.5,320.5M641.5,328.5 646.5,343.5 636.5,353.5 624.5,350.5 616.5,358.5M646.5,343.5 659.5,350.5 666.5,340.5M689.5,333.5 709.5,328.5 716.5,325.5M709.5,328.5 714.5,343.5 704.5,355.5 689.5,353.5 679.5,343.5M659.5,350.5 664.5,365.5 679.5,363.5 689.5,353.5M714.5,343.5 726.5,350.5 734.5,340.5M704.5,355.5 709.5,368.5 726.5,363.5 726.5,350.5M726.5,363.5 739.5,375.5 749.5,373.5M636.5,353.5 644.5,368.5 664.5,365.5M624.5,350.5 619.5,365.5 629.5,375.5 644.5,368.5M629.5,375.5 631.5,390.5 621.5,400.5 619.5,406.5M646.5,375.5 646.5,406.5M664.5,365.5 666.5,383.5 681.5,388.5 684.5,406.5M681.5,388.5 696.5,378.5 709.5,368.5M696.5,378.5 704.5,393.5 701.5,406.5M704.5,393.5 721.5,390.5 739.5,375.5M721.5,390.5 726.5,406.5M694.5,240.5 696.5,260.5 699.5,270.5 695.5,283.5M719.5,233.5 721.5,248.5 726.5,255.5M696.5,260.5 709.5,256.5 726.5,255.5M744.5,220.5 745.5,248.5 739.5,253.5M726.5,265.5 734.5,278.5 744.5,283.5 759.5,273.5M734.5,278.5 729.5,288.5 709.5,303.5 705.5,303.5M744.5,283.5 736.5,295.5 744.5,308.5 739.5,320.5 726.5,325.5 719.5,328.5M744.5,308.5 759.5,310.5 769.5,313.5 779.5,303.5 789.5,295.5M759.5,310.5 754.5,328.5 764.5,333.5 779.5,330.5 789.5,338.5 806.5,335.5M754.5,328.5 749.5,343.5 756.5,358.5 759.5,365.5M769.5,313.5 764.5,298.5 774.5,285.5 784.5,288.5 789.5,295.5 806.5,303.5M774.5,285.5 769.5,275.5M784.5,218.5 781.5,235.5 789.5,253.5 806.5,255.5M764.5,223.5 769.5,238.5 781.5,235.5M789.5,253.5 784.5,270.5 791.5,278.5 806.5,275.5M771.5,378.5 789.5,375.5 806.5,363.5M789.5,375.5 794.5,393.5 806.5,395.5M764.5,333.5 769.5,348.5 784.5,353.5 789.5,338.5M699.5,230.5 709.5,238.5 719.5,233.5M57.5,406.5 57.5,415.5M65.5,416.5 67.5,428.5 62.5,441.5 56.5,456.5 55.5,467.5M45.5,416.5 47.5,431.5 40.5,446.5 32.5,456.5 25.5,459.5M15.5,441.5 20.5,446.5 32.5,456.5M55.5,467.5 51.5,486.5 53.5,491.5 53.5,511.5 47.5,513.5 47.5,523.5 40.5,528.5 38.5,546.5M27.5,471.5 32.5,481.5 25.5,491.5 22.5,503.5 30.5,513.5 47.5,513.5M6.5,511.5 16.5,512.5 17.5,536.5 25.5,556.5 32.5,561.5 40.5,578.5M51.5,486.5 72.5,483.5 85.5,486.5M98.5,406.5 98.5,426.5 95.5,431.5 95.5,446.5 112.5,447.5 112.5,436.5 117.5,421.5 127.5,422.5M100.5,456.5 101.5,471.5M112.5,447.5 115.5,453.5 130.5,458.5 122.5,466.5 117.5,473.5M130.5,416.5 150.5,417.5 150.5,406.5M150.5,417.5 160.5,426.5 185.5,427.5 186.5,421.5 203.5,421.5M185.5,427.5 186.5,453.5 162.5,454.5 155.5,463.5M130.5,458.5 142.5,462.5 150.5,469.5M186.5,453.5 203.5,452.5M113.5,476.5 112.5,501.5 138.5,501.5M92.5,493.5 102.5,496.5 107.5,488.5 112.5,486.5M112.5,501.5 111.5,523.5 102.5,524.5 95.5,518.5 80.5,516.5 75.5,513.5M111.5,523.5 111.5,532.5 147.5,531.5 155.5,526.5 185.5,525.5 183.5,502.5 203.5,502.5M148.5,501.5 183.5,502.5M185.5,481.5 183.5,502.5M147.5,531.5 147.5,563.5 125.5,563.5M80.5,541.5 118.5,541.5 118.5,532.5M80.5,541.5 80.5,561.5 87.5,566.5 87.5,593.5M70.5,531.5 80.5,541.5M118.5,541.5 118.5,563.5 125.5,563.5 125.5,594.5M147.5,563.5 162.5,561.5 165.5,578.5 180.5,581.5 185.5,593.5M162.5,561.5 180.5,556.5 203.5,557.5M185.5,525.5 186.5,541.5 203.5,548.5M57.5,566.5 72.5,561.5 87.5,566.5M6.5,561.5 17.5,571.5 25.5,568.5 40.5,578.5 38.5,591.5M32.5,594.5 32.5,609.5M75.5,594.5 75.5,609.5M102.5,596.5 101.5,609.5M125.5,594.5 125.5,609.5M152.5,594.5 150.5,609.5M6.5,436.5 15.5,441.5M6.5,481.5 27.5,471.5M25.5,459.5 27.5,471.5M216.5,406.5 216.5,523.5M254.5,406.5 254.5,422.5M203.5,422.5 286.5,423.5M203.5,453.5 285.5,453.5M248.5,453.5 248.5,521.5M203.5,484.5 281.5,484.5M203.5,523.5 244.5,522.5 278.5,516.5M244.5,522.5 244.5,556.5 203.5,556.5M210.5,523.5 210.5,556.5M244.5,556.5 281.5,555.5M229.5,556.5 229.5,602.5 203.5,602.5M253.5,556.5 253.5,609.5M290.5,417.5 303.5,416.5 308.5,412.5 325.5,412.5 326.5,406.5M303.5,416.5 299.5,426.5 305.5,438.5 308.5,447.5 313.5,452.5 323.5,451.5 328.5,457.5 333.5,448.5 328.5,436.5 330.5,421.5 333.5,413.5M334.5,461.5 350.5,462.5 350.5,443.5 353.5,431.5 368.5,428.5 368.5,421.5M313.5,464.5 318.5,476.5 313.5,488.5 306.5,499.5 309.5,506.5 303.5,517.5 303.5,524.5M285.5,477.5 315.5,477.5M309.5,506.5 340.5,506.5 341.5,493.5 351.5,492.5 350.5,479.5 358.5,462.5 386.5,461.5 388.5,431.5M341.5,506.5 340.5,519.5 350.5,521.5 348.5,538.5 346.5,548.5M350.5,521.5 396.5,519.5 396.5,501.5 406.5,500.5M375.5,501.5 396.5,501.5 395.5,486.5 406.5,478.5M353.5,479.5 368.5,491.5 375.5,501.5M281.5,532.5 308.5,532.5 309.5,542.5 319.5,551.5 320.5,566.5 315.5,576.5 319.5,581.5 316.5,596.5 318.5,603.5M285.5,581.5 319.5,581.5M320.5,566.5 330.5,568.5 338.5,558.5 346.5,548.5 353.5,556.5 363.5,566.5M338.5,568.5 343.5,573.5 343.5,594.5M343.5,573.5 365.5,571.5 378.5,563.5M378.5,536.5 383.5,531.5 396.5,526.5 398.5,541.5 406.5,544.5M363.5,553.5 378.5,536.5M386.5,461.5 395.5,486.5M388.5,431.5 388.5,446.5M463.5,406.5 463.5,437.5 432.5,438.5 432.5,464.5M493.5,406.5 493.5,438.5 463.5,437.5M493.5,438.5 521.5,438.5M548.5,406.5 548.5,427.5 566.5,428.5M471.5,438.5 472.5,453.5 478.5,453.5 478.5,461.5 506.5,461.5 506.5,492.5M432.5,464.5 443.5,461.5 453.5,467.5 466.5,466.5 471.5,476.5 472.5,481.5M406.5,471.5 416.5,469.5 428.5,472.5 433.5,481.5 433.5,501.5 441.5,502.5 441.5,508.5 451.5,509.5 452.5,523.5 451.5,541.5M463.5,481.5 506.5,483.5M463.5,481.5 464.5,501.5 479.5,502.5 479.5,516.5 488.5,516.5 488.5,531.5 484.5,538.5M506.5,492.5 518.5,493.5 526.5,502.5M506.5,492.5 492.5,506.5 488.5,516.5M506.5,468.5 513.5,464.5 538.5,463.5M441.5,508.5 429.5,509.5 429.5,533.5 426.5,546.5 433.5,548.5M406.5,548.5 426.5,547.5 449.5,548.5 451.5,541.5M449.5,548.5 449.5,594.5M451.5,539.5 506.5,541.5 507.5,531.5 511.5,528.5M479.5,541.5 479.5,577.5 449.5,578.5M506.5,541.5 507.5,568.5 488.5,571.5 487.5,577.5 501.5,577.5 502.5,594.5M507.5,568.5 529.5,569.5M411.5,548.5 412.5,561.5 406.5,562.5M406.5,578.5 411.5,578.5 411.5,594.5M434.5,595.5 434.5,609.5M459.5,595.5 459.5,609.5M498.5,595.5 493.5,609.5M566.5,428.5 566.5,483.5 546.5,484.5M566.5,451.5 578.5,456.5 586.5,438.5 596.5,431.5 609.5,429.5M573.5,417.5 578.5,427.5 588.5,431.5 596.5,431.5M578.5,456.5 581.5,478.5 596.5,481.5 609.5,471.5M566.5,483.5 564.5,512.5 542.5,513.5 544.5,521.5 542.5,531.5 542.5,538.5M581.5,478.5 579.5,512.5 564.5,512.5M579.5,512.5 591.5,513.5 592.5,523.5 591.5,538.5 542.5,538.5M568.5,513.5 571.5,538.5M591.5,513.5 609.5,512.5M542.5,538.5 553.5,542.5 553.5,553.5 533.5,553.5M553.5,553.5 564.5,556.5 564.5,571.5 542.5,572.5 543.5,588.5 556.5,589.5 556.5,609.5M564.5,556.5 581.5,553.5 601.5,553.5 603.5,541.5M564.5,571.5 572.5,572.5 572.5,586.5 578.5,581.5 586.5,568.5 601.5,561.5 609.5,562.5M572.5,586.5 576.5,589.5 609.5,588.5M583.5,589.5 583.5,609.5M533.5,456.5 566.5,457.5M433.5,481.5 463.5,481.5M609.5,429.5 621.5,428.5 629.5,421.5 634.5,418.5 631.5,406.5M641.5,431.5 656.5,423.5 674.5,416.5 684.5,413.5M656.5,423.5 661.5,438.5 674.5,456.5 679.5,478.5 691.5,493.5M644.5,433.5 646.5,451.5 649.5,468.5 661.5,481.5 664.5,491.5M609.5,458.5 629.5,453.5 646.5,451.5M614.5,478.5 641.5,478.5 641.5,493.5 664.5,493.5M641.5,493.5 641.5,521.5 616.5,521.5 614.5,478.5M609.5,513.5 616.5,516.5M641.5,521.5 664.5,518.5 671.5,513.5 696.5,478.5 706.5,478.5M664.5,518.5 666.5,533.5 684.5,534.5 686.5,523.5 699.5,523.5M699.5,516.5 699.5,533.5 721.5,533.5 722.5,518.5 729.5,516.5 727.5,508.5M699.5,516.5 711.5,511.5 727.5,508.5 744.5,511.5 756.5,523.5 769.5,531.5 784.5,538.5M689.5,438.5 704.5,433.5 719.5,428.5 721.5,418.5 716.5,406.5M689.5,438.5 694.5,443.5 709.5,448.5 714.5,458.5M719.5,428.5 729.5,436.5 724.5,446.5 716.5,453.5 714.5,458.5 709.5,468.5 706.5,478.5M729.5,436.5 749.5,431.5 759.5,448.5 751.5,456.5 744.5,468.5 745.5,476.5M739.5,406.5 739.5,426.5 749.5,431.5M749.5,431.5 754.5,423.5 771.5,419.5 779.5,428.5 771.5,443.5 759.5,448.5M706.5,478.5 714.5,476.5 729.5,473.5 745.5,476.5 759.5,481.5 769.5,488.5 779.5,491.5M714.5,478.5 714.5,493.5 719.5,508.5M729.5,473.5 726.5,508.5M745.5,476.5 745.5,511.5M759.5,481.5 761.5,493.5 779.5,501.5M779.5,491.5 784.5,481.5 799.5,478.5M751.5,523.5 749.5,546.5 739.5,553.5 731.5,558.5 734.5,571.5 746.5,576.5 759.5,568.5 756.5,558.5 749.5,546.5M784.5,538.5 789.5,556.5 799.5,558.5M756.5,558.5 774.5,561.5 789.5,556.5M721.5,533.5 739.5,546.5 744.5,551.5M715.5,536.5 715.5,553.5 709.5,568.5 714.5,586.5 724.5,598.5 729.5,609.5M684.5,534.5 679.5,551.5 660.5,553.5 651.5,546.5 639.5,543.5 639.5,526.5M679.5,551.5 684.5,578.5 674.5,581.5 674.5,593.5 681.5,609.5M684.5,578.5 709.5,578.5M660.5,553.5 654.5,566.5 661.5,581.5 674.5,581.5M609.5,531.5 614.5,536.5 612.5,556.5 609.5,556.5M612.5,563.5 647.5,564.5 649.5,592.5 609.5,592.5M647.5,564.5 654.5,566.5M689.5,578.5 689.5,609.5M724.5,598.5 746.5,593.5 745.5,581.5 746.5,576.5M746.5,593.5 759.5,596.5 769.5,581.5 759.5,568.5M631.5,592.5 631.5,609.5M649.5,592.5 659.5,601.5 659.5,609.5M691.5,493.5 671.5,513.5M769.5,531.5 784.5,523.5 789.5,511.5 779.5,501.5M794.5,446.5 784.5,456.5 794.5,468.5 799.5,478.5M684.5,413.5 689.5,438.5M614.5,433.5 629.5,443.5 629.5,453.5M674.5,456.5 661.5,458.5 649.5,468.5M31.5,609.5 35.5,620.5 37.5,636.5 44.5,651.5 53.5,662.5 57.5,674.5 74.5,679.5M37.5,636.5 61.5,635.5 68.5,627.5 65.5,616.5M48.5,614.5 65.5,616.5 74.5,609.5M68.5,627.5 78.5,638.5 74.5,651.5 85.5,655.5M102.5,609.5 102.5,620.5 92.5,629.5 92.5,642.5M70.5,620.5 102.5,620.5M98.5,625.5 123.5,625.5 123.5,609.5M123.5,625.5 123.5,640.5M147.5,609.5 147.5,640.5 146.5,661.5 145.5,681.5M147.5,621.5 174.5,624.5M85.5,655.5 83.5,675.5 74.5,679.5 72.5,687.5 79.5,698.5M5.5,672.5 18.5,677.5 22.5,668.5 18.5,662.5 24.5,661.5M18.5,677.5 18.5,692.5 26.5,701.5M33.5,673.5 42.5,674.5 55.5,677.5 74.5,679.5M94.5,675.5 96.5,688.5 100.5,692.5 92.5,707.5 83.5,714.5 76.5,719.5 72.5,727.5M94.5,675.5 104.5,672.5M100.5,692.5 115.5,690.5 130.5,696.5 141.5,705.5M116.5,664.5 116.5,690.5M104.5,703.5 111.5,713.5 122.5,724.5 133.5,735.5 137.5,746.5M126.5,681.5 130.5,696.5M133.5,673.5 143.5,657.5 146.5,661.5 158.5,666.5 167.5,670.5 174.5,666.5M158.5,666.5 157.5,683.5M159.5,687.5 165.5,694.5 161.5,701.5 163.5,713.5 167.5,720.5M165.5,694.5 174.5,690.5 178.5,696.5M79.5,698.5 100.5,692.5M111.5,653.5 115.5,664.5 118.5,662.5M5.5,651.5 13.5,648.5M44.5,651.5 37.5,644.5 35.5,638.5M215.5,609.5 214.5,644.5M203.5,625.5 222.5,625.5 222.5,623.5 248.5,623.5M248.5,609.5 248.5,641.5M248.5,618.5 284.5,618.5M314.5,609.5 312.5,616.5 313.5,621.5M366.5,609.5 367.5,617.5 370.5,628.5 374.5,633.5M366.5,609.5 366.5,616.5 369.5,622.5 371.5,628.5 373.5,632.5M405.5,609.5 405.5,646.5M434.5,609.5 434.5,640.5M460.5,609.5 461.5,620.5 472.5,620.5 474.5,623.5 469.5,627.5 472.5,631.5 471.5,635.5 474.5,638.5 472.5,642.5 467.5,645.5 464.5,647.5 464.5,653.5 463.5,657.5M467.5,646.5 470.5,644.5 501.5,644.5 501.5,640.5M606.5,640.5 606.5,671.5M599.5,659.5 606.5,659.5M632.5,640.5 630.5,646.5 626.5,651.5 628.5,655.5 620.5,659.5 616.5,664.5 613.5,673.5M628.5,655.5 651.5,656.5 652.5,659.5 659.5,660.5 660.5,677.5 658.5,693.5 660.5,698.5 662.5,699.5 661.5,707.5 658.5,713.5M660.5,698.5 693.5,698.5 695.5,694.5 693.5,692.5 697.5,689.5 702.5,687.5 705.5,684.5 701.5,683.5 701.5,659.5 702.5,656.5 698.5,649.5 692.5,646.5 686.5,644.5 678.5,644.5 673.5,647.5 670.5,653.5 667.5,659.5 668.5,668.5 673.5,673.5 680.5,676.5 686.5,679.5 690.5,686.5M668.5,640.5 672.5,646.5M691.5,699.5 690.5,707.5 688.5,717.5 691.5,719.5 686.5,729.5 682.5,740.5M691.5,719.5 702.5,719.5 707.5,722.5 711.5,722.5 712.5,698.5 716.5,694.5 718.5,687.5 723.5,676.5 727.5,672.5 741.5,669.5M712.5,723.5 719.5,724.5 720.5,729.5 731.5,729.5 731.5,740.5M702.5,687.5 707.5,694.5 711.5,698.5M726.5,640.5 726.5,670.5M710.5,640.5 712.5,647.5 710.5,653.5 705.5,654.5M718.5,683.5 723.5,688.5 731.5,689.5 735.5,687.5 741.5,683.5M731.5,689.5 733.5,693.5 741.5,696.5M677.5,609.5 677.5,618.5 694.5,620.5 706.5,627.5M729.5,609.5 729.5,630.5M706.5,631.5 711.5,639.5M726.5,632.5 726.5,671.5 758.5,670.5 758.5,665.5 781.5,665.5M751.5,671.5 739.5,681.5M719.5,728.5 746.5,730.5 745.5,733.5M736.5,690.5 748.5,695.5 758.5,705.5M758.5,639.5 758.5,670.5M758.5,705.5 756.5,731.5 776.5,726.5 784.5,731.5M758.5,705.5 767.5,698.5 781.5,698.5M685.5,733.5 678.5,745.5M729.5,730.5 729.5,752.5 721.5,753.5 721.5,768.5 706.5,768.5M721.5,768.5 736.5,775.5 744.5,787.5 744.5,792.5M736.5,775.5 765.5,775.5 765.5,792.5M776.5,759.5 791.5,759.5 800.5,773.5M781.5,632.5 758.5,656.5M795.5,712.5 798.5,731.5 805.5,738.5"/>
<path fill="#28405c" stroke="none" d="M299,59 303,56.5 308,55.5 313,57.5 315.5,62.5 318,69 323,71 324,74 320.5,75 319,80 320.5,86 324,91 323,96 320.5,92.5 317,87.5 314,82.5 315,75 313,70 310.5,65 309,60 305.5,59.5 303,62.5 300,61ZM368,261 372,258.5 378,260 383,264 389,267.5 394,272 397,277 393,275 387,271 380.5,267.5 375.5,263 370.5,263ZM438.5,375.5 441,370.5 446,367 450,363 452,365 448.5,369 446,374 442,378 439,377.5ZM605,307 608.5,305.5 609,313 606,313ZM613,288 615,290.5 618,287 621.5,287 623,292 626.5,293 625,297 621.5,298 620,302 616.5,304 614,308 610,312 609,313 609,303 613,300.5 614,295.5 612,292ZM526,502 529,506 532,505 533.5,508.5 531,513.5 529,518.5 528.5,523.5 532,527 536.5,525 535,530 532,535 533.5,538.5 530,536 526.5,531 525.5,523.5 526,517 528,511 526.5,506ZM424,413.5 426.5,416 427,421 430,426 432,430 430.5,434 428,431 426,426 424.5,420ZM784,728.5 786,729.5 787,734 789.5,737 793,739.5 796,744 797,749 794.5,755.5 790.5,754 787,749 785,741.5 783.5,734ZM769,790.5 774,789 779,789.5 779,792 769,792ZM42.5,680.5 46,680 49.5,683.5 52,687.5 51,689.5 48,689.5 45.5,687 43.5,683.5ZM58.5,684.5 60.5,686 62.5,689.5 65,692.5 66,696 67.5,700.5 70,702.5 73.5,703.5 76.5,703 80,705 83,705.5 85,708 84.5,710.5 81,710.5 77.5,708.5 74,707.5 70.5,707 67.5,706 64.5,705.5 62,702.5 61,698.5 60,695.5 57.5,692.5 57,690.5 59.5,690 58.5,687ZM144.5,697.5 147.5,695 151.5,695.5 152.5,697.5 150.5,699 152,700.5 154.5,702 155,705 153,707.5 150,708.5 148,711 146.5,713.5 144,714.5 142.5,712.5 140.5,711 140,708.5 142.5,706 145.5,704.5 147.5,702 147,699.5ZM124,656.5 127.5,653.5 132.5,653 136,656.5 136,661.5 134,666 129,668.5 124.5,667 122,663 122.5,659ZM540,601 542,603 543,607.5 543.5,612 547,613.5 548.5,612.5 552,613 554.5,610 555.5,605.5 556.5,603 558,603.5 557,607.5 556,612 558.5,612.5 562,610.5 563.5,610.5 563.5,613.5 560,614.5 556,615.5 553,617 550,618 548,620 546,620.5 544.5,618 541,617.5 541,613 541.5,607.5 540.5,603.5Z"/>
<path fill="none" stroke="#7e6d06" stroke-width="1" shape-rendering="crispEdges" d="M181.5,6.5 187.5,12.5 193.5,22.5 198.5,35.5 200.5,45.5 200.5,62.5 201.5,75.5 200.5,92.5 197.5,97.5 192.5,105.5 187.5,112.5 186.5,120.5 185.5,130.5 183.5,137.5 180.5,142.5 176.5,146.5 175.5,152.5 173.5,156.5 170.5,161.5 165.5,170.5 160.5,180.5 155.5,190.5 150.5,200.5 147.5,203.5M240.5,6.5 246.5,15.5 253.5,22.5 259.5,32.5 263.5,42.5 264.5,51.5 269.5,57.5 278.5,60.5 288.5,60.5 295.5,56.5 303.5,53.5 310.5,54.5 315.5,58.5 325.5,65.5 335.5,72.5 345.5,78.5 358.5,86.5 368.5,95.5 375.5,103.5 383.5,110.5 393.5,115.5 403.5,120.5 406.5,121.5M240.5,6.5 233.5,12.5 229.5,22.5 228.5,35.5 226.5,47.5 223.5,60.5 213.5,66.5 203.5,70.5M215.5,203.5 220.5,195.5 228.5,187.5 240.5,182.5 253.5,177.5 268.5,172.5 285.5,166.5 303.5,162.5 318.5,160.5 333.5,158.5 343.5,156.5 355.5,150.5 365.5,147.5 378.5,145.5 388.5,142.5 398.5,140.5 406.5,138.5M383.5,110.5 375.5,114.5 370.5,122.5 365.5,132.5 366.5,142.5 373.5,152.5 383.5,160.5 393.5,163.5 403.5,165.5 406.5,165.5M383.5,110.5 389.5,102.5 398.5,100.5 406.5,99.5M406.5,101.5 413.5,100.5 421.5,90.5 428.5,75.5 433.5,60.5 448.5,56.5 461.5,48.5 468.5,37.5 472.5,25.5 471.5,12.5 473.5,6.5M406.5,136.5 421.5,133.5 436.5,131.5 451.5,132.5 468.5,136.5 488.5,137.5 506.5,136.5 518.5,137.5 526.5,145.5 536.5,151.5 546.5,156.5 556.5,158.5 568.5,157.5 581.5,158.5 593.5,160.5 609.5,155.5M411.5,140.5 418.5,150.5 428.5,160.5 438.5,172.5 446.5,185.5 456.5,195.5 463.5,203.5M406.5,101.5 418.5,102.5 431.5,107.5 436.5,117.5 437.5,130.5 432.5,142.5 428.5,155.5 421.5,160.5 411.5,162.5 406.5,165.5M588.5,6.5 587.5,15.5 589.5,25.5 594.5,35.5 599.5,45.5 603.5,55.5 602.5,65.5 599.5,75.5 603.5,85.5 606.5,96.5 596.5,105.5 591.5,111.5 594.5,120.5 601.5,127.5 606.5,132.5 609.5,136.5M593.5,160.5 586.5,170.5 576.5,182.5 568.5,192.5 561.5,203.5M609.5,152.5 614.5,148.5 621.5,147.5 631.5,150.5 641.5,150.5 651.5,146.5 659.5,142.5 669.5,136.5 684.5,128.5 696.5,122.5 709.5,116.5 721.5,110.5 734.5,100.5 744.5,95.5 759.5,87.5 771.5,82.5 784.5,77.5 796.5,75.5 806.5,71.5M609.5,136.5 611.5,143.5 614.5,148.5M659.5,142.5 666.5,150.5 671.5,160.5 676.5,167.5 684.5,175.5 686.5,185.5 694.5,188.5 704.5,190.5 716.5,188.5 729.5,185.5 741.5,182.5 756.5,180.5 769.5,176.5 784.5,173.5 796.5,172.5 806.5,175.5M716.5,188.5 720.5,197.5 724.5,203.5M6.5,256.5 25.5,256.5 37.5,255.5 52.5,253.5 65.5,249.5 80.5,245.5 95.5,240.5 107.5,235.5 120.5,230.5 132.5,226.5 145.5,225.5 160.5,226.5M160.5,226.5 163.5,221.5 171.5,221.5 175.5,225.5 173.5,230.5 167.5,231.5 162.5,230.5 160.5,226.5M160.5,226.5 152.5,220.5 150.5,213.5 146.5,205.5 145.5,203.5M163.5,228.5 166.5,240.5 168.5,253.5 170.5,268.5 172.5,283.5 172.5,303.5 173.5,320.5 177.5,338.5 180.5,353.5 182.5,368.5 183.5,383.5 180.5,395.5 176.5,406.5M175.5,225.5 182.5,220.5 190.5,216.5 197.5,211.5 203.5,208.5M396.5,203.5 398.5,218.5 396.5,233.5 394.5,248.5 395.5,265.5 396.5,283.5 395.5,303.5 399.5,320.5 401.5,338.5 403.5,353.5M433.5,348.5 446.5,338.5 456.5,328.5 463.5,315.5 471.5,303.5 478.5,290.5 486.5,278.5 492.5,265.5 496.5,255.5 499.5,245.5 506.5,238.5 513.5,235.5M463.5,203.5 471.5,213.5 478.5,223.5 483.5,231.5 491.5,234.5 498.5,236.5 506.5,238.5M513.5,235.5 523.5,236.5 533.5,228.5 541.5,220.5 548.5,213.5 556.5,205.5 558.5,203.5M522.5,239.5 528.5,246.5 534.5,253.5 537.5,263.5 542.5,275.5 543.5,290.5 549.5,300.5 556.5,308.5M463.5,363.5 481.5,361.5 498.5,359.5 513.5,356.5 528.5,354.5 546.5,352.5M553.5,395.5 549.5,406.5M639.5,313.5 649.5,306.5 659.5,299.5 669.5,291.5 679.5,285.5 689.5,283.5 699.5,279.5 709.5,275.5 719.5,269.5 725.5,260.5 729.5,255.5 739.5,253.5 749.5,249.5 759.5,244.5 769.5,238.5 781.5,231.5 794.5,226.5 806.5,222.5M724.5,203.5 731.5,213.5 744.5,215.5 751.5,225.5 757.5,234.5 761.5,245.5 764.5,258.5 767.5,270.5 770.5,280.5M739.5,253.5 740.5,261.5 749.5,270.5 759.5,276.5 770.5,283.5 781.5,290.5 791.5,299.5 799.5,305.5 806.5,308.5M631.5,361.5 646.5,365.5 664.5,368.5 684.5,368.5 699.5,370.5 714.5,371.5 731.5,371.5 744.5,373.5 754.5,372.5 761.5,368.5 771.5,361.5 784.5,355.5 794.5,350.5 801.5,344.5 806.5,339.5M6.5,459.5 20.5,461.5 35.5,464.5 50.5,466.5 65.5,468.5 77.5,471.5 87.5,474.5 100.5,475.5 112.5,473.5 125.5,473.5 135.5,473.5 145.5,477.5 151.5,481.5 165.5,479.5 180.5,478.5 192.5,477.5 203.5,475.5M176.5,406.5 172.5,412.5 167.5,421.5 163.5,431.5 162.5,443.5 160.5,456.5 155.5,468.5 151.5,481.5 145.5,491.5 138.5,502.5 135.5,516.5 132.5,531.5 130.5,546.5 130.5,566.5 129.5,581.5 127.5,596.5 126.5,609.5M147.5,472.5 152.5,469.5 156.5,472.5 155.5,478.5 150.5,481.5 147.5,478.5 147.5,472.5M203.5,476.5 218.5,475.5 235.5,474.5 255.5,473.5 268.5,470.5 280.5,467.5 288.5,462.5 295.5,453.5 303.5,443.5 313.5,433.5 323.5,423.5 333.5,413.5 340.5,406.5M255.5,473.5 251.5,483.5 248.5,496.5 243.5,506.5 236.5,516.5 235.5,526.5 230.5,533.5 223.5,542.5 216.5,552.5 214.5,566.5 213.5,581.5 209.5,593.5 205.5,603.5 203.5,609.5M406.5,536.5 400.5,544.5 393.5,553.5 383.5,563.5 373.5,571.5 363.5,578.5 353.5,584.5 343.5,591.5 333.5,597.5 320.5,599.5 313.5,603.5 308.5,609.5M419.5,428.5 426.5,443.5 431.5,456.5 436.5,466.5 439.5,471.5M439.5,471.5 451.5,473.5 463.5,471.5 476.5,466.5 488.5,462.5 501.5,454.5 511.5,448.5 516.5,441.5 523.5,431.5 531.5,421.5 538.5,413.5 544.5,408.5 543.5,406.5M439.5,471.5 437.5,481.5 431.5,493.5 423.5,508.5 416.5,518.5 408.5,531.5 406.5,534.5M611.5,406.5 619.5,413.5 626.5,421.5 634.5,428.5 632.5,436.5 631.5,446.5 630.5,461.5 629.5,478.5 630.5,496.5 631.5,511.5 634.5,523.5 641.5,536.5 647.5,546.5 651.5,561.5 654.5,576.5 657.5,591.5 660.5,603.5 662.5,609.5M626.5,421.5 636.5,428.5 644.5,436.5 651.5,444.5 664.5,452.5 679.5,458.5 694.5,463.5 709.5,466.5 726.5,467.5 744.5,471.5 759.5,473.5 771.5,478.5 786.5,483.5 799.5,487.5 806.5,493.5M626.5,421.5 630.5,431.5 634.5,436.5M806.5,536.5 802.5,546.5 801.5,558.5 797.5,568.5 794.5,578.5 789.5,588.5 786.5,598.5 785.5,609.5M335.5,625.5 339.5,626.5 344.5,627.5 349.5,631.5 356.5,632.5 361.5,633.5 364.5,636.5 368.5,638.5 377.5,638.5 381.5,635.5 384.5,635.5 387.5,632.5 391.5,628.5 397.5,624.5 404.5,621.5 412.5,619.5 422.5,618.5 429.5,619.5 437.5,618.5 443.5,616.5 447.5,617.5 453.5,621.5 459.5,621.5 466.5,620.5 472.5,617.5 477.5,615.5M599.5,640.5 617.5,640.5 630.5,643.5 641.5,645.5 652.5,644.5 661.5,648.5 671.5,651.5 678.5,653.5 686.5,652.5 692.5,656.5 698.5,658.5 706.5,660.5 713.5,661.5 723.5,659.5 736.5,660.5 741.5,662.5M686.5,640.5 692.5,643.5 698.5,651.5 703.5,658.5 708.5,664.5 712.5,672.5 716.5,681.5 719.5,689.5 722.5,698.5 726.5,707.5 731.5,714.5 736.5,722.5 741.5,731.5M741.5,662.5 754.5,659.5 769.5,656.5 781.5,655.5 786.5,654.5M661.5,609.5 669.5,619.5 676.5,629.5 686.5,639.5M741.5,731.5 744.5,739.5 746.5,751.5 749.5,764.5 752.5,779.5 754.5,792.5M785.5,609.5 787.5,619.5 787.5,631.5 784.5,644.5 781.5,655.5 784.5,664.5 791.5,670.5 797.5,677.5 802.5,686.5 806.5,695.5M781.5,646.5 779.5,655.5 780.5,662.5 786.5,666.5 792.5,667.5 795.5,662.5M136.5,660.5 134.5,662.5 132.5,667.5 132.5,672.5 135.5,676.5 141.5,680.5 148.5,682.5 155.5,683.5 158.5,685.5 161.5,686.5 164.5,682.5 168.5,679.5 173.5,673.5 178.5,668.5 181.5,663.5 183.5,660.5M156.5,684.5 160.5,687.5 162.5,684.5 158.5,683.5 156.5,684.5M6.5,661.5 15.5,660.5 27.5,655.5 45.5,649.5 65.5,644.5 75.5,643.5 86.5,646.5 92.5,654.5 96.5,662.5 105.5,669.5 117.5,671.5 132.5,674.5M86.5,646.5 100.5,641.5 127.5,640.5 147.5,641.5 170.5,646.5 180.5,652.5 186.5,656.5 195.5,657.5 203.5,654.5M186.5,656.5 186.5,646.5 190.5,639.5 196.5,632.5 203.5,627.5M6.5,616.5 11.5,624.5 12.5,639.5 11.5,654.5 15.5,660.5M126.5,640.5 128.5,624.5 126.5,609.5M126.5,640.5 131.5,649.5 136.5,659.5 135.5,671.5 133.5,674.5M476.5,615.5 483.5,615.5 490.5,615.5 496.5,616.5 505.5,616.5 514.5,615.5 520.5,618.5 526.5,620.5 533.5,623.5 538.5,626.5 544.5,626.5 550.5,628.5 556.5,628.5 559.5,631.5 565.5,633.5 570.5,635.5 575.5,636.5 581.5,639.5 590.5,640.5 594.5,638.5 599.5,639.5 609.5,640.5M203.5,653.5 213.5,649.5 228.5,645.5 243.5,642.5 258.5,641.5 273.5,641.5 285.5,640.5 295.5,637.5 303.5,632.5 306.5,627.5 310.5,623.5 320.5,624.5 335.5,625.5M305.5,629.5 306.5,619.5 308.5,609.5M203.5,609.5 197.5,625.5 190.5,640.5 185.5,657.5M401.5,340.5 400.5,347.5 401.5,354.5 400.5,360.5 402.5,368.5 401.5,374.5 404.5,380.5 403.5,389.5 404.5,396.5 407.5,402.5 408.5,410.5 412.5,417.5 416.5,423.5 420.5,431.5 421.5,437.5 423.5,439.5M340.5,406.5 343.5,402.5 351.5,400.5 358.5,400.5 367.5,399.5 374.5,396.5 381.5,391.5 389.5,386.5 396.5,384.5 404.5,381.5 408.5,375.5 411.5,370.5 413.5,366.5 415.5,361.5 420.5,357.5 426.5,352.5 429.5,347.5 436.5,344.5 442.5,340.5M388.5,386.5 392.5,375.5 396.5,371.5 401.5,369.5 408.5,367.5 413.5,366.5M413.5,366.5 423.5,366.5 432.5,363.5 442.5,362.5 450.5,362.5 458.5,364.5 468.5,364.5 480.5,362.5M579.5,335.5 583.5,334.5 589.5,335.5 592.5,335.5 593.5,341.5 594.5,348.5 594.5,351.5 592.5,354.5 589.5,355.5 586.5,356.5 583.5,360.5 579.5,359.5 576.5,357.5 575.5,352.5 575.5,346.5 576.5,340.5 579.5,335.5M551.5,300.5 553.5,303.5 556.5,306.5 557.5,313.5 559.5,318.5 565.5,320.5 569.5,324.5 573.5,332.5 576.5,336.5 579.5,340.5 581.5,345.5 583.5,349.5M580.5,300.5 576.5,303.5 574.5,309.5 572.5,317.5 570.5,323.5 569.5,324.5M640.5,314.5 633.5,316.5 626.5,319.5 618.5,320.5 610.5,322.5 605.5,328.5 600.5,332.5 594.5,335.5 589.5,340.5 584.5,344.5 583.5,349.5M540.5,352.5 547.5,352.5 556.5,350.5 564.5,347.5 572.5,347.5 576.5,349.5 583.5,350.5M583.5,350.5 589.5,351.5 595.5,352.5 605.5,353.5 610.5,357.5 615.5,360.5 621.5,361.5 628.5,361.5 636.5,361.5 640.5,362.5M583.5,352.5 581.5,357.5 576.5,361.5 573.5,365.5 568.5,367.5 564.5,371.5 563.5,375.5 558.5,378.5 554.5,384.5 552.5,392.5 551.5,397.5 548.5,400.5M583.5,352.5 583.5,360.5 586.5,365.5 591.5,367.5 595.5,372.5 599.5,378.5 602.5,386.5 604.5,393.5 607.5,400.5M586.5,356.5 589.5,361.5 591.5,367.5M583.5,349.5 583.5,352.5"/>
<path fill="#004365" stroke="#000" stroke-width="1.25" stroke-linejoin="round" d="M5,705.5 8.5,704.5 12.5,703 16.5,702.5 18.5,699.5 22.5,698.5 26.5,699 29.5,699 30.5,702 29.5,704 26.5,704.5 26.5,707 28,708.5 32.5,707 37.5,706.5 41,705.5 45,705.5 46.5,704.5 48.5,705.5 48,706.5 46,708 46.5,712.5 45,716 48,715.5 51,716 52,721 52,724 50.5,726 55,725 58.5,724.5 61,724 62.5,726.5 65.5,726.5 67.5,729 70,729.5 70.5,727 72,728 73.5,731 75,733.5 76,737.5 73.5,739.5 70,740 66,742.5 67.5,745.5 70,748.5 73.5,750.5 76,751 78.5,752 82.5,753.5 86,755 90,756.5 95,755 100,754 103.5,753 106,751.5 105,754.5 107.5,756.5 110,756.5 113,755.5 114,752.5 115.5,749.5 118.5,748 121,745 125,743.5 127.5,741.5 129.5,742 132,741.5 135,743.5 138.5,744.5 142,746 142,746 144.5,747 147.5,746 149.5,742.5 152,740 155.5,741 157,737.5 154.5,735.5 153.5,732.5 151.5,730.5 150.5,728 149.5,724.5 150.5,722 154.5,720 153,715.5 152,711 155,712.5 158,715 157.5,717.5 160.5,721 163,723 166,724.5 168.5,726 170.5,728.5 173.5,729 175.5,731 179,734 181.5,736 183,738.5 185.5,742.5 189.5,743.5 192,745 194.5,746 197,748 199,749.5 202,751 204.5,753 206.5,755 209.5,756 212,757.5 214.5,759.5 217,759 219.5,759.5 222.5,758.5 225,759 228,759.5 230.5,758.5 233,759.5 236,759.5 238.5,758.5 241.5,759 240.5,756.5 238,754 233,753.5 230.5,751 229.5,747.5 227.5,745 227,742 224.5,742 222,742.5 218,741.5 214.5,742.5 212,740.5 208,738 204.5,737 200.5,737.5 198,735 197,731 194.5,728 190.5,726 188.5,722 184,720 182,717.5 184.5,716.5 186.5,713.5 187.5,709.5 191,709.5 191.5,705.5 193,701.5 197,702.5 199.5,700 202,697 205.5,696 206.5,691 206.5,688.5 205,686 204,681 202,682.5 199,685 197.5,689.5 195.5,693.5 192,695 187.5,694 186,691 184.5,688 180,689 178,687 177,684 178,681 182,680 187,679 189,677 191,675 192.5,673 194,671 197,668.5 202,667.5 204,666 207,665 208,662.5 209.5,660 210.5,660 214,658 216,656 214.5,653.5 213.5,653 213.5,651.5 216.5,651 220,651.5 220,653.5 219,656 221.5,655.5 224.5,655 227,654 229.5,653 231.5,651.5 235.5,649 239.5,647.5 240.5,645 243.5,644.5 246.5,645.5 249.5,645 252,645.5 253,647.5 255,649 258,651 260.5,653 264,652.5 268,651 271,649 274.5,651.5 278,654.5 281,653 284,650.5 286,649 289,647.5 293,649 296.5,650.5 299,651.5 299.5,654 302.5,654.5 305.5,653 306.5,649 307.5,644 306.5,639 307.5,634 305.5,631.5 306,629 308,627.5 310.5,625.5 312.5,622.5 314,621.5 315.5,623.5 320,624 321,627.5 320.5,632.5 320.5,638 320,641.5 321.5,645 324.5,647.5 326.5,646.5 328,649 329,653 332,655 334.5,657 335.5,660 333,661 328,662 323,662 319,661.5 315.5,663 313,664 316.5,663 320.5,662.5 324,662.5 328,662.5 331.5,662.5 335.5,662.5 338.5,661.5 341.5,661.5 344.5,661 345,659.5 348,659 350.5,657.5 353.5,656.5 356.5,655.5 359.5,655 362.5,654.5 366,654 369,652.5 372.5,652 376,651 379,650 382.5,649.5 385.5,649.5 389,649 392.5,648.5 396,648.5 399,648 402.5,647.5 405.5,647.5 409,648 412.5,647 415.5,647.5 419,647.5 422.5,648.5 425.5,649 429,648.5 432.5,649.5 435,650 438,650 441,651 444,651 446.5,653 449.5,653.5 452.5,655 455.5,656 458.5,657 461.5,659 464.5,660 467.5,661 469.5,663 472.5,663 475,664.5 477,666.5 477,667.5 480,669 482,671.5 484,674 487,675.5 490,677 492,679.5 495,680.5 497,683.5 499.5,685 502,686.5 504,688 507,688.5 510,691.5 513,694.5 513.5,697.5 515,700 515,703 516,706 515.5,710.5 518,711.5 521,711 523.5,712 525.5,713.5 528.5,716.5 531,714.5 532,712 528,711 532,709.5 537,708 540.5,706 543,702.5 547,701 549.5,702 547,705 548,707 550.5,706 553.5,705 555.5,703 558,702 560.5,699.5 563,699 566,697 568,695 570.5,693.5 573,692 575.5,691 578.5,689.5 580.5,687.5 579,684 583,682.5 585,679 587.5,677 592,675.5 594.5,674 597.5,673 599,676 604,674.5 609,674.5 609,674 612.5,673.5 613.5,676 615,678.5 618,679.5 620,682 623,683 625,684.5 629,684.5 631.5,687 634,688 636.5,689.5 639.5,693 641,696 642.5,698.5 643,701 644,703.5 646.5,707.5 650.5,710 653.5,713 657,713.5 656.5,716.5 656.5,720 656,723 657,726.5 660,728.5 664,731.5 666,733 668.5,734 672,737.5 673.5,741 674,741.5 676.5,745 678.5,747 680.5,749 680.5,752 681.5,755 680,758 680.5,762 684,759 688,756 691,756.5 694,756.5 697,758.5 700,759 701.5,761.5 704,763 703,766 703.5,769 705,771.5 706.5,774 708.5,776 709.5,779 711,782.5 710.5,788 706.5,790.5 705,794 705,797 706,800 705.5,803.5 705,806.5 705.5,808 4,808 4,705.5Z"/>
<path fill="#004365" stroke="#000" stroke-width="1" stroke-linejoin="round" d="M343,652 345,651.5 346.5,654 349,653 350,651 352.5,651.5 353.5,653 355.5,652 356.5,650 357,647.5 358.5,646 360.5,642.5 363,644 363,646 360.5,647 358.5,649 358.5,652 356.5,654.5 354,656.5 350,657.5 346.5,658 343.5,657 344,654.5ZM366,651 370,649 372,648 374,646.5 375,644.5 376.5,643 378,639 377.5,635 375.5,632.5 377.5,631.5 378.5,635.5 381.5,636 381.5,638 382,640.5 382,642.5 385,642.5 385,640 386,637.5 387.5,634 388,631.5 389.5,632 390,634.5 389,636.5 389,639 391,641.5 393.5,642.5 397.5,643 398.5,644.5 396,645 393.5,644.5 391,646 388,647 385,648.5 381.5,648.5 378.5,650 375.5,651 372.5,652 370,652 367.5,652.5ZM417.5,644 419.5,643.5 421,645.5 425,644 427.5,641.5 426.5,638.5 429,639 430,641 431.5,639 432.5,641.5 435,643.5 438.5,642 442.5,641 446,640 448,639 449,641.5 451,642 453,641 453.5,644 455,645.5 455,648 452,649 450,647 446.5,646 443.5,646.5 441,648 437.5,649 435,648 432.5,648.5 430,648 427.5,647 425,647 422.5,648 420,646ZM474,656.5 475.5,658.5 475,662 478,663.5 480,661.5 483,660.5 483,663.5 484.5,665 487,662.5 490,660 492,659 493.5,657.5 495.5,653.5 497.5,652.5 499,654.5 496.5,656 494.5,659.5 491.5,661.5 488.5,664 485.5,666.5 487,669.5 490,671.5 488.5,673 485.5,671.5 484,668 482,665 479.5,664.5 477,663.5 474.5,661 474,659ZM490.5,671.5 493,673.5 495.5,675 499,674.5 501.5,677.5 504.5,678.5 507,677.5 509,680 505.5,681 502.5,681.5 500,679.5 497,677.5 495,676 493,675 492,673ZM580,684.5 582.5,685.5 586,685 587,688 586.5,691.5 584,693 580.5,691 583,689.5 584.5,687 581.5,687ZM807,584.5 805.5,585.5 803.5,587.5 803,590 803,592.5 802.5,595 803.5,598 802.5,600 802,602.5 802,605 802,607.5 803,609.5 802.5,612 802.5,614.5 802.5,616.5 802.5,619 803,621.5 803,623.5 803,626 802.5,628.5 803,631 803.5,633.5 803,636 804,638.5 804,641.5 805,644 805,646.5 807.5,648 807,646 807,643.5 808,641.5 807.5,639 807,637 808,634.5 807.5,632 807.5,630 807,627.5 808,625.5 807.5,623 808,621 807.5,618.5 807,616.5 807,614 807,611.5 807,609.5 806.5,607 807,605 807.5,602.5 806.5,600.5 807.5,598 807,596 807,593.5 807.5,591 807,589 807,586.5Z"/>
<path fill="#5d504b" stroke="#000" stroke-width="1" stroke-linejoin="round" d="M15,720 18.5,718 23,716 27,716.5 30.5,718 33,720 36,721 39.5,721 38.5,723 36,724.5 35,727 33,728.5 30.5,730 28,728 25,726 22,725 18.5,723.5 16,722ZM5,710.5 8,710.5 7.5,713.5 9.5,717 13,719 15.5,720 13.5,721 10,720.5 5,720Z"/>
<path fill="url(#mr)" stroke="none" d="M203,675 208,674 215.5,673.5 223,671.5 228,674 227.5,680 225.5,686.5 226,694 223,701.5 220.5,707.5 218,710 203,710ZM204.5,676 209.5,678.5 214.5,678.5 219.5,673.5 224.5,671 228,668.5 228.5,673.5 227.5,680 228,686 225.5,692.5 223,698.5 221,703.5 222,707.5 218,705 213,707.5 212,711 207,713.5 203,718.5 202,725 202.5,730 201.5,736 198,735 197,731 194.5,728 190.5,726 188,722.5 184.5,720 182,717.5 184.5,716 187,713.5 187.5,710 190.5,709.5 192,705.5 193,702 197,702.5 199.5,700 202,697.5 205.5,696 207,691 205,686 204.5,681ZM149.5,722.5 152,721 154.5,718.5 153,715 152,711 155,712.5 157.5,715 157,717.5 160.5,721 165.5,725 170.5,728 175.5,730.5 179.5,733.5 183,738.5 184.5,742.5 182,744 178,745 174.5,746 169.5,748.5 165.5,751.5 163,755 161.5,757.5 159.5,753.5 157.5,748.5 156.5,745 159,741 162,737.5 162.5,733.5 159,731 155,730 151.5,728 149,725ZM132,740 134.5,742.5 138,746 143,747.5 147,750 148,753.5 147,759 132,759ZM207,738 212,737.5 217,738 218,741 214.5,742.5 212,740.5ZM219.5,743.5 224.5,741 227.5,741 229.5,747.5 230.5,751 233,753.5 238,753.5 240.5,756.5 234.5,756 230.5,755 228,751 224.5,747.5ZM803.5,563.5 807.5,563.5 807.5,586 803,587.5 802.5,605 802.5,631 803.5,638.5 807.5,648 807.5,654.5 803.5,653.5 801.5,646.5 796.5,642.5 799.5,634.5 794.5,627 798.5,619 796.5,609 799.5,599 796.5,593.5 801.5,585.5 799.5,579.5 803,573.5Z"/>
<path fill="url(#mr2)" stroke="none" d="M75,740 80,741 85,740.5 90,742 95,743.5 100,745.5 104,748 106.5,751.5 103.5,753 98.5,754 92.5,755.5 87.5,755 83,753 80,750 76.5,746ZM113,755.5 114,751.5 116,748.5 120,747 123,743.5 127.5,741.5 132.5,741 137.5,743.5 142,745.5 142,758 113,758ZM802.5,559.5 807.5,559.5 807.5,586 803,587.5 802.5,605 802.5,631 803.5,638.5 807.5,648 807.5,658.5 802.5,656.5 799.5,650.5 781.5,646.5 791.5,642.5 789.5,633 786.5,619 791.5,615 791.5,607 787.5,595.5 794.5,589.5 790.5,575.5 798.5,573.5 801.5,565.5Z"/>
<path fill="none" stroke="#000" stroke-width="1.2" shape-rendering="crispEdges" d="M258,661 261.5,661.5 265.5,662.5 270.5,663.5 275.5,664M278,664.5 281.5,665 285.5,665M228,663 231.5,662.5 235.5,662 234,664 233,665.5M241,664.5 244,664 246.5,663.5 250.5,662M291,662.5 293.5,663 296,663.5M305.5,659 307.5,660 307.5,664 306,662M270.5,656.5 271.5,657M249,678.5 252.5,681.5 253.5,686.5 254,691.5 253.5,696.5 252.5,701.5 250.5,705 248,710M241.5,702 243,699 246,696.5 248.5,694 250.5,693M246,697 248,698 249.5,696.5M510,691 508,695 506.5,700 507.5,705.5 509.5,710 511.5,713 515.5,711M534,720 537,719 542,716.5 549.5,713 557,708.5 560.5,704.5M562.5,702.5 567,700.5 570,698.5M801.5,561.5 804.5,564.5 803.5,566.5M790.5,575.5 794.5,576.5 792.5,574.5M796.5,579.5 801.5,582.5 804.5,577.5 802.5,585.5 798.5,587.5 803.5,589.5M787.5,595.5 795.5,596 800.5,599 797.5,603 802.5,605M791.5,607 799.5,609 801.5,613 794.5,612M786.5,619 794.5,620 800.5,621 798.5,626 802.5,627M791.5,633 796.5,634.5 800.5,633 799.5,638.5 795.5,640.5 803,642.5M781.5,646.5 787.5,647.5 794.5,648.5 801.5,647.5 804.5,650.5 803.5,656.5M793.5,591.5 799.5,593.5 796.5,597M792.5,615 798.5,616M790.5,625 796.5,629 793.5,631M794.5,642.5 800.5,644.5M27.5,734 28.5,735M249.5,678.5 252.5,682 254.5,686 255,692.5 253.5,697.5 252,703 249.5,708 245.5,712 242,715M238,716.5 239.5,717.5M236,722.5 233.5,725.5M228,728 224.5,731M242,700 243.5,697.5 247,696 249.5,693 250.5,693.5 247.5,697.5 244.5,700 242.5,702.5M228,662.5 232,662 235.5,661 233.5,665 230.5,664.5 228,662.5M242,664.5 247,663 250.5,661.5M257,661 263,662 269.5,662.5 274,663.5M205,670 208,670.5 209.5,672M185.5,730.5 190.5,735 194.5,740 195.5,742.5"/>
<path fill="none" stroke="#000" stroke-width="2.6" stroke-linejoin="round" d="M804.5,647.5 799.5,648.5 794.5,647.5 790.5,648.5 787.5,652.5 784.5,656.5 785.5,660.5 787.5,664.5 786.5,668.5 784.5,672 785.5,678 788.5,682 790.5,687 791.5,692 792.5,698 794,704M779.5,672.5 782.5,670.5 785,672M794,703.5 795,706 793,710 789,714 788,719 785,724 784,729"/>
<path fill="none" stroke="#0a4a78" stroke-width="1.3" stroke-linejoin="round" d="M804.5,647.5 799.5,648.5 794.5,647.5 790.5,648.5 787.5,652.5 784.5,656.5 785.5,660.5 787.5,664.5 786.5,668.5 784.5,672 785.5,678 788.5,682 790.5,687 791.5,692 792.5,698 794,704M779.5,672.5 782.5,670.5 785,672M794,703.5 795,706 793,710 789,714 788,719 785,724 784,729"/>
<path fill="none" stroke="#000" stroke-width="1" shape-rendering="crispEdges" d="M6.5,105.5 153.5,105.5 155.5,108.5 156.5,112.5 160.5,114.5 161.5,117.5 159.5,122.5 156.5,127.5 151.5,131.5 147.5,136.5 143.5,141.5 140.5,146.5 137.5,149.5 186.5,149.5M203.5,97.5 199.5,98.5 197.5,102.5 200.5,105.5 202.5,110.5 199.5,115.5 195.5,118.5 192.5,122.5 189.5,125.5 187.5,128.5 191.5,131.5 195.5,133.5 196.5,137.5 192.5,140.5 189.5,142.5 186.5,146.5 186.5,149.5 190.5,152.5 191.5,156.5 187.5,158.5 184.5,161.5 186.5,165.5 184.5,168.5 179.5,170.5 175.5,169.5 171.5,171.5 170.5,175.5 172.5,178.5 175.5,182.5 172.5,186.5 168.5,188.5 165.5,191.5 166.5,195.5 162.5,197.5 159.5,199.5 156.5,201.5 155.5,203.5M202.5,6.5 205.5,11.5 208.5,18.5 206.5,25.5 204.5,30.5 203.5,37.5 205.5,43.5 209.5,48.5 213.5,54.5 218.5,59.5 221.5,60.5 223.5,56.5 225.5,54.5 228.5,57.5 231.5,62.5 232.5,67.5 229.5,71.5 227.5,75.5 228.5,80.5 230.5,83.5 227.5,86.5 228.5,91.5 224.5,96.5 220.5,97.5 217.5,94.5 213.5,94.5 210.5,98.5 208.5,104.5 204.5,107.5 203.5,105.5M208.5,104.5 264.5,105.5 311.5,105.5 310.5,88.5 323.5,90.5 325.5,92.5 406.5,91.5M304.5,6.5 306.5,10.5 308.5,15.5 304.5,18.5 299.5,20.5 290.5,21.5 283.5,23.5 279.5,26.5 278.5,32.5 280.5,37.5 283.5,42.5 282.5,48.5 279.5,53.5 275.5,54.5 270.5,51.5 267.5,47.5 263.5,45.5 253.5,42.5 246.5,40.5 240.5,39.5 235.5,41.5 229.5,50.5 226.5,54.5M406.5,90.5 456.5,93.5 483.5,94.5 508.5,94.5 531.5,94.5 571.5,95.5 609.5,96.5M609.5,96.5 635.5,97.5 659.5,95.5 709.5,96.5 739.5,96.5 766.5,94.5 786.5,94.5 806.5,97.5M635.5,97.5 646.5,90.5 659.5,86.5 675.5,82.5 677.5,77.5 682.5,73.5 694.5,71.5 697.5,66.5 696.5,61.5 704.5,57.5 707.5,48.5 719.5,42.5 734.5,35.5 745.5,27.5 755.5,20.5 761.5,13.5 765.5,12.5 762.5,17.5 766.5,21.5 765.5,26.5 771.5,31.5 776.5,35.5 781.5,40.5 786.5,42.5 795.5,40.5 801.5,36.5 806.5,32.5M747.5,6.5 752.5,10.5 759.5,12.5 762.5,13.5M786.5,94.5 784.5,98.5 781.5,105.5 782.5,111.5 781.5,118.5 779.5,117.5 775.5,118.5 769.5,122.5 764.5,130.5 759.5,137.5 751.5,139.5 745.5,136.5 736.5,138.5 731.5,143.5 726.5,148.5 720.5,152.5 716.5,150.5 715.5,145.5 709.5,146.5 702.5,151.5 695.5,155.5 692.5,160.5 691.5,166.5 684.5,168.5 676.5,170.5 670.5,173.5 665.5,178.5 659.5,180.5 654.5,183.5 649.5,187.5 641.5,187.5 631.5,188.5 621.5,192.5 614.5,197.5 609.5,203.5M155.5,203.5 160.5,205.5 153.5,209.5 156.5,214.5 158.5,220.5 156.5,225.5 150.5,228.5 152.5,233.5 146.5,234.5 142.5,238.5 146.5,243.5 145.5,249.5 140.5,251.5 135.5,250.5 131.5,248.5 130.5,253.5 132.5,256.5 127.5,259.5 125.5,263.5 128.5,265.5 130.5,269.5 125.5,270.5 122.5,274.5 123.5,280.5 123.5,289.5 120.5,293.5 115.5,294.5 110.5,295.5 111.5,299.5 107.5,301.5 102.5,305.5 97.5,306.5 98.5,310.5 103.5,311.5 101.5,315.5 96.5,314.5 95.5,318.5 98.5,320.5 100.5,324.5 93.5,326.5 88.5,328.5 86.5,331.5 91.5,333.5 90.5,338.5 86.5,341.5 87.5,346.5 82.5,348.5 80.5,351.5 85.5,354.5 82.5,358.5 76.5,355.5 75.5,359.5 80.5,361.5 81.5,365.5 76.5,366.5 74.5,370.5 77.5,374.5 75.5,378.5 78.5,380.5 85.5,375.5 86.5,380.5 82.5,384.5 80.5,388.5 82.5,391.5 86.5,393.5 87.5,396.5 83.5,398.5 82.5,401.5 78.5,404.5 77.5,406.5M143.5,238.5 203.5,238.5M203.5,238.5 299.5,238.5 300.5,237.5 335.5,237.5 406.5,238.5M299.5,238.5 301.5,243.5 306.5,246.5 307.5,248.5 305.5,268.5 303.5,288.5 301.5,308.5 299.5,328.5 296.5,353.5 294.5,378.5 291.5,406.5M406.5,238.5 471.5,238.5 609.5,239.5M588.5,239.5 589.5,228.5 591.5,218.5 596.5,215.5 602.5,214.5 609.5,210.5M492.5,239.5 496.5,260.5 499.5,278.5 504.5,308.5 508.5,328.5 512.5,350.5 516.5,373.5 518.5,393.5 520.5,406.5M609.5,239.5 679.5,238.5 691.5,234.5 704.5,230.5 710.5,226.5 719.5,224.5 729.5,221.5 731.5,220.5 734.5,221.5 744.5,220.5 806.5,223.5M679.5,238.5 675.5,244.5 669.5,249.5 662.5,255.5 660.5,263.5 664.5,268.5 671.5,273.5 679.5,279.5 684.5,284.5 695.5,283.5 697.5,289.5 701.5,296.5 705.5,303.5 706.5,310.5 711.5,318.5 716.5,325.5 720.5,331.5 726.5,335.5 734.5,340.5 740.5,346.5 745.5,355.5 751.5,361.5 759.5,365.5 762.5,370.5 767.5,375.5 765.5,381.5 767.5,388.5 772.5,390.5 775.5,396.5 780.5,400.5 784.5,406.5M6.5,415.5 78.5,415.5M77.5,406.5 81.5,409.5 78.5,414.5 76.5,419.5 78.5,424.5 83.5,422.5 86.5,427.5 81.5,431.5 78.5,436.5 81.5,441.5 86.5,443.5 88.5,448.5 85.5,452.5 81.5,449.5 80.5,454.5 85.5,457.5 87.5,462.5 83.5,464.5 86.5,468.5 92.5,467.5 96.5,472.5 98.5,473.5 100.5,477.5 95.5,479.5 91.5,483.5 87.5,486.5 90.5,491.5 86.5,494.5 82.5,492.5 80.5,497.5 85.5,499.5 83.5,504.5 78.5,508.5 75.5,513.5 71.5,517.5 66.5,519.5 65.5,524.5 70.5,527.5 68.5,531.5 63.5,529.5 61.5,534.5 56.5,536.5 53.5,541.5 58.5,543.5 57.5,548.5 52.5,551.5 48.5,556.5 47.5,561.5 52.5,564.5 52.5,569.5 43.5,571.5 46.5,578.5 43.5,583.5 48.5,589.5 45.5,594.5M45.5,594.5 186.5,594.5 185.5,598.5 183.5,603.5 182.5,609.5M290.5,406.5 288.5,431.5 284.5,463.5 281.5,493.5 279.5,516.5 280.5,536.5 281.5,556.5 282.5,581.5 283.5,609.5M406.5,594.5 345.5,595.5 344.5,598.5 345.5,601.5 343.5,604.5 341.5,609.5M520.5,406.5 522.5,416.5 524.5,428.5 528.5,438.5 529.5,448.5 536.5,457.5 539.5,466.5 537.5,474.5 544.5,481.5 542.5,486.5 534.5,491.5 533.5,498.5 533.5,506.5 531.5,511.5 529.5,521.5 531.5,533.5 533.5,541.5 533.5,551.5 531.5,563.5 529.5,576.5 533.5,583.5 537.5,593.5 539.5,601.5 542.5,609.5M406.5,594.5 537.5,594.5M784.5,406.5 789.5,408.5 795.5,412.5 797.5,418.5 800.5,426.5 802.5,431.5 805.5,438.5M344.5,609.5 346.5,612.5 349.5,616.5 353.5,619.5 358.5,622.5 359.5,625.5 359.5,629.5 357.5,632.5 355.5,635.5 356.5,638.5 357.5,642.5 359.5,643.5M609.5,623.5 634.5,625.5 671.5,627.5 709.5,630.5 744.5,632.5 745.5,641.5 746.5,649.5 752.5,651.5 757.5,650.5 759.5,641.5 761.5,631.5 759.5,624.5 757.5,616.5 761.5,611.5 769.5,610.5 779.5,614.5 785.5,617.5 791.5,619.5 799.5,620.5 802.5,619.5M182.5,609.5 180.5,614.5 178.5,621.5 179.5,629.5 183.5,634.5 186.5,640.5 188.5,646.5 190.5,652.5 192.5,659.5 193.5,665.5 196.5,667.5M283.5,609.5 284.5,609.5 285.5,634.5 285.5,651.5M467.5,594.5 536.5,594.5M536.5,590.5 537.5,594.5 539.5,597.5 539.5,601.5M547.5,619.5 559.5,620.5 584.5,622.5 609.5,623.5"/>
<path fill="none" stroke="#ffa000" stroke-width="1" shape-rendering="crispEdges" d="M497.5,105.5 503.5,105.5"/>
<path fill="none" stroke="#ffe000" stroke-width="1" shape-rendering="crispEdges" d="M744.5,789.5 744.5,792.5"/>
<g fill="none" stroke="#f0f0f0" stroke-width="1"><circle cx="407" cy="407" r="519.5"/><circle cx="407" cy="407" r="399.5" stroke-dasharray="1871.1 23 616.0 0"/><circle cx="407" cy="407" r="279.5" stroke-dasharray="1305.6 23 427.5 0"/><circle cx="407" cy="407" r="159.5" stroke-dasharray="740.1 23 239.0 0"/></g>
<g font-family="'Liberation Mono','DejaVu Sans Mono',monospace" font-size="11" fill="#ffff96" text-anchor="middle"><text x="405.6" y="11">313</text><text x="405.6" y="131">219</text><text x="405.8" y="251">125</text><text x="405.8" y="371">31</text></g>
<circle cx="407" cy="407" r="39.5" fill="none" stroke="#ff0808" stroke-width="1.15"/>
</svg>
</div>
<div id="legend" style="position:absolute;left:8px;top:758px;width:245px;height:46px;background:#000;box-sizing:border-box;border:1px solid #000;"><div style="position:absolute;left:0;top:0;right:0;bottom:0;border:1px solid #a0a0a0;"></div></div>
<svg width="245" height="46" viewBox="8 758 245 46" style="position:absolute;left:8px;top:758px;" fill="none" stroke-width="1" shape-rendering="crispEdges">
<g stroke="#00ffff"><circle cx="60.5" cy="780.5" r="4" shape-rendering="auto"/><path d="M58 780.5h5"/><path d="M82 780.5h7"/><circle cx="110.5" cy="780.5" r="4" shape-rendering="auto"/><path d="M108 780.5h5M110.5 778v5"/><path d="M132 780.5h7M135.5 777v7"/></g>
<g stroke="#ffff00"><circle cx="60.5" cy="793.5" r="4" shape-rendering="auto"/><path d="M58 793.5h5"/><path d="M82 793.5h7"/><circle cx="110.5" cy="793.5" r="4" shape-rendering="auto"/><path d="M108 793.5h5M110.5 791v5"/><path d="M132 793.5h7M135.5 790v7"/></g>
</svg>

<div id="cpbox"></div>
<div class="pn" style="left:812px;top:8px;width:320px;height:320px;"></div>
<div class="pn" style="left:812px;top:333px;width:320px;height:115px;"></div>
<div class="pn" style="left:812px;top:453px;width:320px;height:349px;"></div>
<div class="bx" style="left:819px;top:16px;width:58px;height:18px;background:#5c0000;"></div>
<div class="bx" style="left:883px;top:16px;width:58px;height:18px;background:#383838;"></div>
<div class="bx" style="left:994px;top:16px;width:128px;height:18px;background:#383838;"></div>
<div class="bx g" style="left:821px;top:64px;width:82px;height:16px;background:#5f5f5f;"></div>
<div class="bx g" style="left:931px;top:64px;width:82px;height:16px;background:#5f5f5f;"></div>
<div class="bx g" style="left:1041px;top:64px;width:82px;height:16px;background:#5f5f5f;"></div>
<div class="hl" style="left:821px;top:217px;width:303px;"></div>
<div class="bar" style="left:925px;top:227px;"><i style="width:7px;background:#ff0000;"></i></div>
<div class="bar" style="left:1028px;top:227px;"><i style="width:14px;background:#8cc8ff;"></i></div>
<div class="bar" style="left:925px;top:281px;"><i style="width:11px;background:#e85aa8;"></i></div>
<div class="bar" style="left:1028px;top:281px;"><i style="width:18px;background:#00ff00;"></i></div>
<div style="position:absolute;left:1016px;top:231px;width:7px;height:2px;background:#d8d8d8;"></div>
<div style="position:absolute;left:1016px;top:285px;width:7px;height:2px;background:#d8d8d8;"></div>
<div class="hl" style="left:821px;top:358px;width:302px;"></div>
<svg id="trend" width="320" height="280" viewBox="812 530 320 280" style="position:absolute;left:812px;top:530px;" shape-rendering="crispEdges" fill="none" stroke="#d8d8d8" stroke-width="1">
<path d="M822.5 777.5H1088.5V542.5"/>
<path d="M822.5 779v-5M866.5 779v-5M911.5 779v-5M955.5 779v-5M999.5 779v-5M1044.5 779v-5"/>
<path d="M1090 542.5h-6M1090 620.5h-6M1090 699.5h-6M1090 581.5h-4M1090 659.5h-4M1090 738.5h-4"/>
<path d="M891.5 777.5l1.5-8h3l1.5 8M962.5 777.5l1.5-8h4l1.5 8" shape-rendering="auto" stroke="#fff"/>
</svg>

<span id="t0" class="t" style="left:824.30px;top:19.85px;font:bold 12px/1 'DejaVu Sans','Liberation Sans',sans-serif;color:#d4d0c8;letter-spacing:0.034px;">STRIKE</span>
<span id="t1" class="t" style="left:890.80px;top:19.85px;font:bold 12px/1 'DejaVu Sans','Liberation Sans',sans-serif;color:#b8b8b8;letter-spacing:0.334px;">NOISE</span>
<span id="t2" class="t" style="left:998.60px;top:19.85px;font:bold 12px/1 'DejaVu Sans','Liberation Sans',sans-serif;color:#fff;letter-spacing:-0.031px;">Bng 138°</span>
<span id="t3" class="t" style="left:1075.60px;top:19.85px;font:bold 12px/1 'DejaVu Sans','Liberation Sans',sans-serif;color:#00e600;letter-spacing:0.032px;">401mi</span>
<span id="t4" class="t" style="left:829.35px;top:65.85px;font:12px/1 'DejaVu Sans','Liberation Sans',sans-serif;color:#fff;letter-spacing:-0.212px;">Strikes/min</span>
<span id="t5" class="t" style="left:942.31px;top:65.85px;font:12px/1 'DejaVu Sans','Liberation Sans',sans-serif;color:#fff;">Close/min</span>
<span id="t6" class="t" style="left:1048.89px;top:65.85px;font:12px/1 'DejaVu Sans','Liberation Sans',sans-serif;color:#fff;">Noises/min</span>
<span id="t7" class="t" style="left:883.52px;top:89.31px;font:bold 28px/1 'DejaVu Sans','Liberation Sans',sans-serif;color:#fff;">0</span>
<span id="t8" class="t" style="left:993.52px;top:89.31px;font:bold 28px/1 'DejaVu Sans','Liberation Sans',sans-serif;color:#fff;">0</span>
<span id="t9" class="t" style="left:1103.52px;top:89.31px;font:bold 28px/1 'DejaVu Sans','Liberation Sans',sans-serif;color:#c0c0c0;">0</span>
<span id="t10" class="t" style="left:825.90px;top:132.85px;font:12px/1 'DejaVu Sans','Liberation Sans',sans-serif;color:#fff;letter-spacing:0.342px;">Total Strikes</span>
<span id="t11" class="t" style="left:944.40px;top:132.85px;font:12px/1 'DejaVu Sans','Liberation Sans',sans-serif;color:#fff;letter-spacing:0.367px;">Total Close</span>
<span id="t12" class="t" style="left:1047.40px;top:132.85px;font:12px/1 'DejaVu Sans','Liberation Sans',sans-serif;color:#c0c0c0;letter-spacing:0.346px;">Total Noises</span>
<span id="t13" class="t" style="left:887.32px;top:150.85px;font:12px/1 'DejaVu Sans','Liberation Sans',sans-serif;color:#fff;">14</span>
<span id="t14" class="t" style="left:1004.96px;top:150.85px;font:12px/1 'DejaVu Sans','Liberation Sans',sans-serif;color:#fff;">0</span>
<span id="t15" class="t" style="left:1107.32px;top:150.85px;font:12px/1 'DejaVu Sans','Liberation Sans',sans-serif;color:#fff;">87</span>
<span id="t16" class="t" style="left:821.30px;top:205.15px;font:12px/1 'DejaVu Sans','Liberation Sans',sans-serif;color:#c0c0c0;letter-spacing:0.206px;">Lightning type distribution</span>
<span id="t17" class="t" style="left:821.30px;top:226.85px;font:bold 12px/1 'DejaVu Sans Condensed','DejaVu Sans','Liberation Sans',sans-serif;color:#fff;letter-spacing:0.135px;">Cloud-ground</span>
<span id="t18" class="t" style="left:912.20px;top:226.85px;font:12px/1 'DejaVu Sans','Liberation Sans',sans-serif;color:#e0e0e0;">+</span>
<span id="t19" class="t" style="left:979.80px;top:226.85px;font:bold 12px/1 'DejaVu Sans','Liberation Sans',sans-serif;color:#fff;letter-spacing:-0.067px;">14%</span>
<span id="t20" class="t" style="left:1082.50px;top:226.85px;font:bold 12px/1 'DejaVu Sans','Liberation Sans',sans-serif;color:#fff;letter-spacing:0.233px;">29%</span>
<span id="t21" class="t" style="left:821.30px;top:250.85px;font:12px/1 'DejaVu Sans','Liberation Sans',sans-serif;color:#c0c0c0;letter-spacing:0.515px;">Count</span>
<span id="t22" class="t" style="left:925.80px;top:250.85px;font:bold 12px/1 'DejaVu Sans Condensed','DejaVu Sans','Liberation Sans',sans-serif;color:#fff;">2</span>
<span id="t23" class="t" style="left:1028.10px;top:250.85px;font:bold 12px/1 'DejaVu Sans Condensed','DejaVu Sans','Liberation Sans',sans-serif;color:#fff;">4</span>
<span id="t24" class="t" style="left:821.30px;top:280.85px;font:bold 12px/1 'DejaVu Sans Condensed','DejaVu Sans','Liberation Sans',sans-serif;color:#fff;letter-spacing:0.099px;">Intracloud</span>
<span id="t25" class="t" style="left:912.20px;top:280.85px;font:12px/1 'DejaVu Sans','Liberation Sans',sans-serif;color:#e0e0e0;">+</span>
<span id="t26" class="t" style="left:979.80px;top:280.85px;font:bold 12px/1 'DejaVu Sans','Liberation Sans',sans-serif;color:#fff;letter-spacing:-0.067px;">21%</span>
<span id="t27" class="t" style="left:1082.50px;top:280.85px;font:bold 12px/1 'DejaVu Sans','Liberation Sans',sans-serif;color:#fff;letter-spacing:0.233px;">36%</span>
<span id="t28" class="t" style="left:821.30px;top:304.85px;font:12px/1 'DejaVu Sans','Liberation Sans',sans-serif;color:#c0c0c0;letter-spacing:0.515px;">Count</span>
<span id="t29" class="t" style="left:925.80px;top:304.85px;font:bold 12px/1 'DejaVu Sans Condensed','DejaVu Sans','Liberation Sans',sans-serif;color:#fff;">3</span>
<span id="t30" class="t" style="left:1028.10px;top:304.85px;font:bold 12px/1 'DejaVu Sans Condensed','DejaVu Sans','Liberation Sans',sans-serif;color:#fff;">5</span>
<span id="t31" class="t" style="left:822.20px;top:339.86px;font:bold 16px/1 'DejaVu Sans','Liberation Sans',sans-serif;color:#00e600;letter-spacing:0.238px;">1/30/2026 5:34:52 PM</span>
<span id="t32" class="t" style="left:821.50px;top:377.85px;font:12px/1 'DejaVu Sans','Liberation Sans',sans-serif;color:#fff;letter-spacing:0.022px;">Squelch</span>
<span id="t33" class="t" style="left:909.50px;top:377.85px;font:12px/1 'DejaVu Sans','Liberation Sans',sans-serif;color:#fff;">0</span>
<span id="t34" class="t" style="left:981.20px;top:377.85px;font:12px/1 'DejaVu Sans','Liberation Sans',sans-serif;color:#fff;letter-spacing:0.251px;">Upload</span>
<span id="t35" class="t" style="left:1061.00px;top:377.85px;font:12px/1 'DejaVu Sans','Liberation Sans',sans-serif;color:#c0c0c0;letter-spacing:0.208px;">Disabled</span>
<span id="t36" class="t" style="left:821.50px;top:397.85px;font:12px/1 'DejaVu Sans','Liberation Sans',sans-serif;color:#fff;letter-spacing:0.366px;">Persistence</span>
<span id="t37" class="t" style="left:909.50px;top:397.85px;font:12px/1 'DejaVu Sans','Liberation Sans',sans-serif;color:#fff;letter-spacing:-0.164px;">90 min</span>
<span id="t38" class="t" style="left:981.20px;top:397.85px;font:12px/1 'DejaVu Sans','Liberation Sans',sans-serif;color:#fff;letter-spacing:0.480px;">Capture</span>
<span id="t39" class="t" style="left:1061.00px;top:397.85px;font:12px/1 'DejaVu Sans','Liberation Sans',sans-serif;color:#00e600;letter-spacing:-0.105px;">Active</span>
<span id="t40" class="t" style="left:821.50px;top:417.85px;font:12px/1 'DejaVu Sans','Liberation Sans',sans-serif;color:#fff;letter-spacing:0.288px;">Range</span>
<span id="t41" class="t" style="left:909.50px;top:417.85px;font:12px/1 'DejaVu Sans','Liberation Sans',sans-serif;color:#fff;letter-spacing:-0.170px;">313 mi</span>
<span id="t42" class="t" style="left:981.20px;top:417.85px;font:12px/1 'DejaVu Sans','Liberation Sans',sans-serif;color:#fff;letter-spacing:0.025px;">Receiver</span>
<span id="t43" class="t" style="left:1061.00px;top:417.85px;font:12px/1 'DejaVu Sans','Liberation Sans',sans-serif;color:#00e600;letter-spacing:0.350px;">Enabled</span>
<span id="t44" class="t" style="left:821.50px;top:464.85px;font:12px/1 'DejaVu Sans','Liberation Sans',sans-serif;color:#c0c0c0;letter-spacing:0.017px;">Uptime</span>
<span id="t45" class="t" style="left:909.50px;top:464.85px;font:12px/1 'DejaVu Sans','Liberation Sans',sans-serif;color:#fff;letter-spacing:0.396px;">461:19</span>
<span id="t46" class="t" style="left:981.20px;top:464.85px;font:12px/1 'DejaVu Sans','Liberation Sans',sans-serif;color:#c0c0c0;letter-spacing:0.247px;">Peak time</span>
<span id="t47" class="t" style="left:1061.00px;top:464.85px;font:12px/1 'DejaVu Sans','Liberation Sans',sans-serif;color:#c0c0c0;letter-spacing:0.458px;">Plot</span>
<span id="t48" class="t" style="left:821.50px;top:487.85px;font:12px/1 'DejaVu Sans','Liberation Sans',sans-serif;color:#c0c0c0;letter-spacing:0.452px;">Peak rate</span>
<span id="t49" class="t" style="left:909.50px;top:487.85px;font:12px/1 'DejaVu Sans','Liberation Sans',sans-serif;color:#fff;letter-spacing:-0.103px;">2/min</span>
<span id="t50" class="t" style="left:981.20px;top:487.85px;font:12px/1 'DejaVu Sans','Liberation Sans',sans-serif;color:#fff;letter-spacing:0.212px;">4:12 AM</span>
<span id="t51" class="t" style="left:1061.00px;top:487.85px;font:12px/1 'DejaVu Sans','Liberation Sans',sans-serif;color:#fff;letter-spacing:0.260px;">Strike</span>
<span id="t52" class="t" style="left:822.50px;top:517.85px;font:12px/1 'DejaVu Sans','Liberation Sans',sans-serif;color:#c0c0c0;letter-spacing:0.430px;">Trend graph</span>
<span id="t53" class="t" style="left:908.30px;top:517.85px;font:12px/1 'DejaVu Sans','Liberation Sans',sans-serif;color:#fff;letter-spacing:-0.024px;">60 min</span>
<span id="t54" class="t" style="left:820.61px;top:782.97px;font:11.5px/1 'DejaVu Sans Condensed','DejaVu Sans','Liberation Sans',sans-serif;color:#e4e4e4;">60</span>
<span id="t55" class="t" style="left:864.41px;top:782.97px;font:11.5px/1 'DejaVu Sans Condensed','DejaVu Sans','Liberation Sans',sans-serif;color:#e4e4e4;">50</span>
<span id="t56" class="t" style="left:909.01px;top:782.97px;font:11.5px/1 'DejaVu Sans Condensed','DejaVu Sans','Liberation Sans',sans-serif;color:#e4e4e4;">40</span>
<span id="t57" class="t" style="left:953.21px;top:782.97px;font:11.5px/1 'DejaVu Sans Condensed','DejaVu Sans','Liberation Sans',sans-serif;color:#e4e4e4;">30</span>
<span id="t58" class="t" style="left:997.21px;top:782.97px;font:11.5px/1 'DejaVu Sans Condensed','DejaVu Sans','Liberation Sans',sans-serif;color:#e4e4e4;">20</span>
<span id="t59" class="t" style="left:1042.41px;top:782.97px;font:11.5px/1 'DejaVu Sans Condensed','DejaVu Sans','Liberation Sans',sans-serif;color:#e4e4e4;">10</span>
<span id="t60" class="t" style="left:1087.30px;top:782.97px;font:11.5px/1 'DejaVu Sans Condensed','DejaVu Sans','Liberation Sans',sans-serif;color:#e4e4e4;">0</span>
<span id="t61" class="t" style="left:1099.04px;top:782.97px;font:11.5px/1 'DejaVu Sans Condensed','DejaVu Sans','Liberation Sans',sans-serif;color:#e4e4e4;">min</span>
<span id="t62" class="t" style="left:1092.30px;top:537.27px;font:11.5px/1 'DejaVu Sans Condensed','DejaVu Sans','Liberation Sans',sans-serif;color:#e4e4e4;">30</span>
<span id="t63" class="t" style="left:1092.30px;top:615.27px;font:11.5px/1 'DejaVu Sans Condensed','DejaVu Sans','Liberation Sans',sans-serif;color:#e4e4e4;">20</span>
<span id="t64" class="t" style="left:1092.30px;top:693.77px;font:11.5px/1 'DejaVu Sans Condensed','DejaVu Sans','Liberation Sans',sans-serif;color:#e4e4e4;">10</span>
<span id="t65" class="t" style="left:688.50px;top:794.89px;font:9px/1 'DejaVu Sans Condensed','DejaVu Sans','Liberation Sans',sans-serif;color:#fff;letter-spacing:0.099px;">©2005 Astrogenic Systems</span>
<span id="t66" class="t" style="left:13.10px;top:763.59px;font:9px/1 'DejaVu Sans Condensed','DejaVu Sans','Liberation Sans',sans-serif;color:#fff;letter-spacing:0.185px;">Symbols</span>
<span id="t67" class="t" style="left:53.10px;top:763.59px;font:9px/1 'DejaVu Sans Condensed','DejaVu Sans','Liberation Sans',sans-serif;color:#fff;letter-spacing:1.020px;">-CG</span>
<span id="t68" class="t" style="left:78.00px;top:763.59px;font:9px/1 'DejaVu Sans Condensed','DejaVu Sans','Liberation Sans',sans-serif;color:#fff;letter-spacing:1.766px;">-IC</span>
<span id="t69" class="t" style="left:99.00px;top:763.59px;font:9px/1 'DejaVu Sans Condensed','DejaVu Sans','Liberation Sans',sans-serif;color:#fff;letter-spacing:0.541px;">+CG</span>
<span id="t70" class="t" style="left:123.70px;top:763.59px;font:9px/1 'DejaVu Sans Condensed','DejaVu Sans','Liberation Sans',sans-serif;color:#fff;letter-spacing:1.186px;">+IC</span>
<span id="t71" class="t" style="left:153.20px;top:763.59px;font:9px/1 'DejaVu Sans Condensed','DejaVu Sans','Liberation Sans',sans-serif;color:#fff;letter-spacing:0.008px;">Strike age color codes</span>
<span id="t72" class="t" style="left:13.10px;top:776.69px;font:9px/1 'DejaVu Sans Condensed','DejaVu Sans','Liberation Sans',sans-serif;color:#fff;letter-spacing:0.009px;">Recent</span>
<span id="t73" class="t" style="left:13.10px;top:789.59px;font:9px/1 'DejaVu Sans Condensed','DejaVu Sans','Liberation Sans',sans-serif;color:#fff;letter-spacing:0.567px;">Old</span>
<span id="t74" class="t" style="left:154.00px;top:776.69px;font:9px/1 'DejaVu Sans Condensed','DejaVu Sans','Liberation Sans',sans-serif;color:#ffd800;letter-spacing:-0.847px;">15+</span>
<span id="t75" class="t" style="left:188.60px;top:776.69px;font:9px/1 'DejaVu Sans Condensed','DejaVu Sans','Liberation Sans',sans-serif;color:#ffb400;letter-spacing:-0.547px;">30+</span>
<span id="t76" class="t" style="left:223.10px;top:776.69px;font:9px/1 'DejaVu Sans Condensed','DejaVu Sans','Liberation Sans',sans-serif;color:#ffa000;letter-spacing:-0.247px;">45+</span>
<span id="t77" class="t" style="left:154.00px;top:789.59px;font:9px/1 'DejaVu Sans Condensed','DejaVu Sans','Liberation Sans',sans-serif;color:#ff8800;letter-spacing:-0.847px;">60+</span>
<span id="t78" class="t" style="left:188.60px;top:789.59px;font:9px/1 'DejaVu Sans Condensed','DejaVu Sans','Liberation Sans',sans-serif;color:#ff6400;letter-spacing:-0.547px;">75+</span>
<span id="t79" class="t" style="left:223.10px;top:789.59px;font:9px/1 'DejaVu Sans Condensed','DejaVu Sans','Liberation Sans',sans-serif;color:#ff3c00;letter-spacing:-0.247px;">90+</span>
</body>
</html>
